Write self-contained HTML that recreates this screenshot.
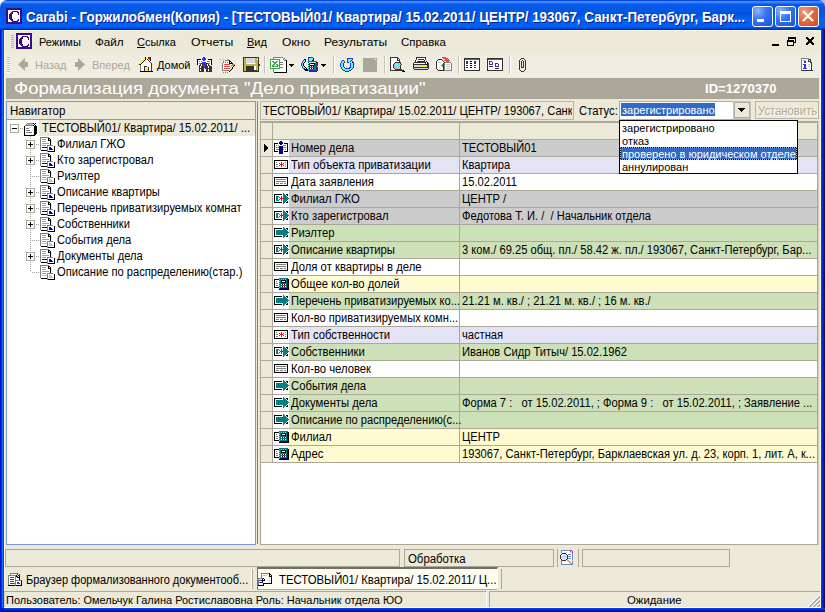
<!DOCTYPE html><html><head><meta charset="utf-8"><style>
*{margin:0;padding:0;box-sizing:border-box}
html,body{width:825px;height:612px;overflow:hidden;background:#ECE9D8}
body{position:relative;font-family:"Liberation Sans",sans-serif;font-size:11px;color:#000}
.ab{position:absolute}
.t{position:absolute;white-space:pre;line-height:13px;font-size:11px}
.m{position:absolute;white-space:pre;line-height:14px;font-size:12px;transform:scaleX(0.94);transform-origin:0 0}
svg{position:absolute;overflow:visible}
</style></head><body>
<div class="ab" style="left:0;top:0;width:8px;height:8px;background:#fff"></div>
<div class="ab" style="left:817px;top:0;width:8px;height:8px;background:#A8B8F0"></div>
<div class="ab" style="left:0;top:0;width:825px;height:30px;border-radius:7px 7px 0 0;background:linear-gradient(to bottom,#0A47DC 0px,#0A47DC 1px,#3C8DFF 1px,#3C8DFF 2px,#3483FC 2px,#3483FC 3px,#1B6CF2 3px,#1B6CF2 4px,#0658E6 4px,#0658E6 5px,#0458E6 9px,#0458E6 10px,#0054E0 13px,#0054E0 14px,#0060F6 18px,#0060F6 19px,#0060F6 26px,#0060F6 27px,#0054EA 27px,#0054EA 28px,#0044D4 28px,#0044D4 29px,#0030B0 29px,#0030B0 30px)"></div>
<div class="ab" style="left:0;top:30px;width:4px;height:582px;background:linear-gradient(to right,#0014D0 0,#0014D0 1px,#0A2EDB 1px,#0A2EDB 2px,#1670F0 2px,#1670F0 3px,#0048E0 3px)"></div>
<div class="ab" style="left:821px;top:30px;width:4px;height:582px;background:linear-gradient(to right,#0040F0 0,#0040F0 1px,#0030D0 1px,#0030D0 2px,#001CA0 2px,#001CA0 3px,#000E80 3px)"></div>
<div class="ab" style="left:0;top:608px;width:825px;height:4px;background:linear-gradient(to bottom,#0040F0 0,#0040F0 1px,#0030D0 1px,#0030D0 2px,#001CA0 2px,#001CA0 3px,#000E80 3px)"></div>
<div class="ab" style="left:0;top:608px;width:4px;height:4px;background:#0014D0"></div>
<div class="ab" style="left:4px;top:30px;width:1px;height:578px;background:#FFF6DA"></div>
<div class="ab" style="left:820px;top:30px;width:1px;height:578px;background:#FFF7DC"></div>
<div class="ab" style="left:4px;top:607px;width:817px;height:1px;background:#FFFFF5"></div>
<svg style="left:6px;top:8px" width="16" height="16" shape-rendering="crispEdges"><rect x="0" y="0" width="16" height="1" fill="#3A0A8C"/><rect x="0" y="1" width="16" height="1" fill="#3A0A8C"/><rect x="0" y="2" width="2" height="1" fill="#3A0A8C"/><rect x="2" y="2" width="12" height="1" fill="#FFFFFF"/><rect x="14" y="2" width="2" height="1" fill="#3A0A8C"/><rect x="0" y="3" width="2" height="1" fill="#3A0A8C"/><rect x="2" y="3" width="4" height="1" fill="#FFFFFF"/><rect x="6" y="3" width="6" height="1" fill="#3A0A8C"/><rect x="12" y="3" width="2" height="1" fill="#FFFFFF"/><rect x="14" y="3" width="2" height="1" fill="#3A0A8C"/><rect x="0" y="4" width="2" height="1" fill="#3A0A8C"/><rect x="2" y="4" width="3" height="1" fill="#FFFFFF"/><rect x="5" y="4" width="2" height="1" fill="#3A0A8C"/><rect x="7" y="4" width="4" height="1" fill="#FFFFFF"/><rect x="11" y="4" width="2" height="1" fill="#3A0A8C"/><rect x="13" y="4" width="1" height="1" fill="#FFFFFF"/><rect x="14" y="4" width="2" height="1" fill="#3A0A8C"/><rect x="0" y="5" width="2" height="1" fill="#3A0A8C"/><rect x="2" y="5" width="2" height="1" fill="#FFFFFF"/><rect x="4" y="5" width="3" height="1" fill="#3A0A8C"/><rect x="7" y="5" width="5" height="1" fill="#FFFFFF"/><rect x="12" y="5" width="1" height="1" fill="#3A0A8C"/><rect x="13" y="5" width="1" height="1" fill="#FFFFFF"/><rect x="14" y="5" width="2" height="1" fill="#3A0A8C"/><rect x="0" y="6" width="2" height="1" fill="#3A0A8C"/><rect x="2" y="6" width="1" height="1" fill="#FFFFFF"/><rect x="3" y="6" width="3" height="1" fill="#3A0A8C"/><rect x="6" y="6" width="6" height="1" fill="#FFFFFF"/><rect x="12" y="6" width="1" height="1" fill="#3A0A8C"/><rect x="13" y="6" width="1" height="1" fill="#FFFFFF"/><rect x="14" y="6" width="2" height="1" fill="#3A0A8C"/><rect x="0" y="7" width="2" height="1" fill="#3A0A8C"/><rect x="2" y="7" width="1" height="1" fill="#FFFFFF"/><rect x="3" y="7" width="3" height="1" fill="#3A0A8C"/><rect x="6" y="7" width="8" height="1" fill="#FFFFFF"/><rect x="14" y="7" width="2" height="1" fill="#3A0A8C"/><rect x="0" y="8" width="2" height="1" fill="#3A0A8C"/><rect x="2" y="8" width="1" height="1" fill="#FFFFFF"/><rect x="3" y="8" width="3" height="1" fill="#3A0A8C"/><rect x="6" y="8" width="8" height="1" fill="#FFFFFF"/><rect x="14" y="8" width="2" height="1" fill="#3A0A8C"/><rect x="0" y="9" width="2" height="1" fill="#3A0A8C"/><rect x="2" y="9" width="1" height="1" fill="#FFFFFF"/><rect x="3" y="9" width="3" height="1" fill="#3A0A8C"/><rect x="6" y="9" width="8" height="1" fill="#FFFFFF"/><rect x="14" y="9" width="2" height="1" fill="#3A0A8C"/><rect x="0" y="10" width="2" height="1" fill="#3A0A8C"/><rect x="2" y="10" width="1" height="1" fill="#FFFFFF"/><rect x="3" y="10" width="3" height="1" fill="#3A0A8C"/><rect x="6" y="10" width="8" height="1" fill="#FFFFFF"/><rect x="14" y="10" width="2" height="1" fill="#3A0A8C"/><rect x="0" y="11" width="2" height="1" fill="#3A0A8C"/><rect x="2" y="11" width="2" height="1" fill="#FFFFFF"/><rect x="4" y="11" width="3" height="1" fill="#3A0A8C"/><rect x="7" y="11" width="5" height="1" fill="#FFFFFF"/><rect x="12" y="11" width="1" height="1" fill="#3A0A8C"/><rect x="13" y="11" width="1" height="1" fill="#FFFFFF"/><rect x="14" y="11" width="2" height="1" fill="#3A0A8C"/><rect x="0" y="12" width="2" height="1" fill="#3A0A8C"/><rect x="2" y="12" width="3" height="1" fill="#FFFFFF"/><rect x="5" y="12" width="2" height="1" fill="#3A0A8C"/><rect x="7" y="12" width="4" height="1" fill="#FFFFFF"/><rect x="11" y="12" width="2" height="1" fill="#3A0A8C"/><rect x="13" y="12" width="1" height="1" fill="#FFFFFF"/><rect x="14" y="12" width="2" height="1" fill="#3A0A8C"/><rect x="0" y="13" width="2" height="1" fill="#3A0A8C"/><rect x="2" y="13" width="4" height="1" fill="#FFFFFF"/><rect x="6" y="13" width="6" height="1" fill="#3A0A8C"/><rect x="12" y="13" width="2" height="1" fill="#FFFFFF"/><rect x="14" y="13" width="2" height="1" fill="#3A0A8C"/><rect x="0" y="14" width="16" height="1" fill="#3A0A8C"/><rect x="0" y="15" width="16" height="1" fill="#3A0A8C"/></svg>
<div class="t" style="left:27px;top:10px;font:bold 14px/16px 'Liberation Sans';color:#0A1E8C;transform:scaleX(0.957);transform-origin:0 0">Carabi - Горжилобмен(Копия) - [ТЕСТОВЫЙ01/ Квартира/ 15.02.2011/ ЦЕНТР/ 193067, Санкт-Петербург, Барк...</div>
<div class="t" style="left:26px;top:9px;font:bold 14px/16px 'Liberation Sans';color:#fff;transform:scaleX(0.957);transform-origin:0 0">Carabi - Горжилобмен(Копия) - [ТЕСТОВЫЙ01/ Квартира/ 15.02.2011/ ЦЕНТР/ 193067, Санкт-Петербург, Барк...</div>
<div class="ab" style="left:752px;top:6px;width:21px;height:21px;border:1px solid #fff;border-radius:3px;background:radial-gradient(circle at 25% 20%,#8FB4FA 0,#3A78F2 40%,#2260E6 75%,#1A50D8 100%)"></div>
<div class="ab" style="left:775px;top:6px;width:21px;height:21px;border:1px solid #fff;border-radius:3px;background:radial-gradient(circle at 25% 20%,#8FB4FA 0,#3A78F2 40%,#2260E6 75%,#1A50D8 100%)"></div>
<div class="ab" style="left:798px;top:6px;width:21px;height:21px;border:1px solid #fff;border-radius:3px;background:radial-gradient(circle at 30% 25%,#F0A080 0,#E26A45 45%,#D04A20 100%)"></div>
<div class="ab" style="left:757px;top:19px;width:7px;height:3px;background:#fff"></div>
<div class="ab" style="left:780px;top:11px;width:11px;height:11px;border:1px solid #fff;border-top:3px solid #fff"></div>
<svg style="left:798px;top:6px" width="21" height="21"><path d="M5 5 L15 15 M15 5 L5 15" stroke="#fff" stroke-width="2.2"/></svg>
<div class="ab" style="left:11px;top:35px;width:3px;height:1px;background:#B8B5A4"></div>
<div class="ab" style="left:11px;top:37px;width:3px;height:1px;background:#B8B5A4"></div>
<div class="ab" style="left:11px;top:39px;width:3px;height:1px;background:#B8B5A4"></div>
<div class="ab" style="left:11px;top:41px;width:3px;height:1px;background:#B8B5A4"></div>
<div class="ab" style="left:11px;top:43px;width:3px;height:1px;background:#B8B5A4"></div>
<div class="ab" style="left:11px;top:45px;width:3px;height:1px;background:#B8B5A4"></div>
<div class="ab" style="left:11px;top:47px;width:3px;height:1px;background:#B8B5A4"></div>
<svg style="left:16px;top:33px" width="16" height="16" shape-rendering="crispEdges"><rect x="0" y="0" width="16" height="1" fill="#3A0A8C"/><rect x="0" y="1" width="16" height="1" fill="#3A0A8C"/><rect x="0" y="2" width="2" height="1" fill="#3A0A8C"/><rect x="2" y="2" width="12" height="1" fill="#FFFFFF"/><rect x="14" y="2" width="2" height="1" fill="#3A0A8C"/><rect x="0" y="3" width="2" height="1" fill="#3A0A8C"/><rect x="2" y="3" width="4" height="1" fill="#FFFFFF"/><rect x="6" y="3" width="6" height="1" fill="#3A0A8C"/><rect x="12" y="3" width="2" height="1" fill="#FFFFFF"/><rect x="14" y="3" width="2" height="1" fill="#3A0A8C"/><rect x="0" y="4" width="2" height="1" fill="#3A0A8C"/><rect x="2" y="4" width="3" height="1" fill="#FFFFFF"/><rect x="5" y="4" width="2" height="1" fill="#3A0A8C"/><rect x="7" y="4" width="4" height="1" fill="#FFFFFF"/><rect x="11" y="4" width="2" height="1" fill="#3A0A8C"/><rect x="13" y="4" width="1" height="1" fill="#FFFFFF"/><rect x="14" y="4" width="2" height="1" fill="#3A0A8C"/><rect x="0" y="5" width="2" height="1" fill="#3A0A8C"/><rect x="2" y="5" width="2" height="1" fill="#FFFFFF"/><rect x="4" y="5" width="3" height="1" fill="#3A0A8C"/><rect x="7" y="5" width="5" height="1" fill="#FFFFFF"/><rect x="12" y="5" width="1" height="1" fill="#3A0A8C"/><rect x="13" y="5" width="1" height="1" fill="#FFFFFF"/><rect x="14" y="5" width="2" height="1" fill="#3A0A8C"/><rect x="0" y="6" width="2" height="1" fill="#3A0A8C"/><rect x="2" y="6" width="1" height="1" fill="#FFFFFF"/><rect x="3" y="6" width="3" height="1" fill="#3A0A8C"/><rect x="6" y="6" width="6" height="1" fill="#FFFFFF"/><rect x="12" y="6" width="1" height="1" fill="#3A0A8C"/><rect x="13" y="6" width="1" height="1" fill="#FFFFFF"/><rect x="14" y="6" width="2" height="1" fill="#3A0A8C"/><rect x="0" y="7" width="2" height="1" fill="#3A0A8C"/><rect x="2" y="7" width="1" height="1" fill="#FFFFFF"/><rect x="3" y="7" width="3" height="1" fill="#3A0A8C"/><rect x="6" y="7" width="8" height="1" fill="#FFFFFF"/><rect x="14" y="7" width="2" height="1" fill="#3A0A8C"/><rect x="0" y="8" width="2" height="1" fill="#3A0A8C"/><rect x="2" y="8" width="1" height="1" fill="#FFFFFF"/><rect x="3" y="8" width="3" height="1" fill="#3A0A8C"/><rect x="6" y="8" width="8" height="1" fill="#FFFFFF"/><rect x="14" y="8" width="2" height="1" fill="#3A0A8C"/><rect x="0" y="9" width="2" height="1" fill="#3A0A8C"/><rect x="2" y="9" width="1" height="1" fill="#FFFFFF"/><rect x="3" y="9" width="3" height="1" fill="#3A0A8C"/><rect x="6" y="9" width="8" height="1" fill="#FFFFFF"/><rect x="14" y="9" width="2" height="1" fill="#3A0A8C"/><rect x="0" y="10" width="2" height="1" fill="#3A0A8C"/><rect x="2" y="10" width="1" height="1" fill="#FFFFFF"/><rect x="3" y="10" width="3" height="1" fill="#3A0A8C"/><rect x="6" y="10" width="8" height="1" fill="#FFFFFF"/><rect x="14" y="10" width="2" height="1" fill="#3A0A8C"/><rect x="0" y="11" width="2" height="1" fill="#3A0A8C"/><rect x="2" y="11" width="2" height="1" fill="#FFFFFF"/><rect x="4" y="11" width="3" height="1" fill="#3A0A8C"/><rect x="7" y="11" width="5" height="1" fill="#FFFFFF"/><rect x="12" y="11" width="1" height="1" fill="#3A0A8C"/><rect x="13" y="11" width="1" height="1" fill="#FFFFFF"/><rect x="14" y="11" width="2" height="1" fill="#3A0A8C"/><rect x="0" y="12" width="2" height="1" fill="#3A0A8C"/><rect x="2" y="12" width="3" height="1" fill="#FFFFFF"/><rect x="5" y="12" width="2" height="1" fill="#3A0A8C"/><rect x="7" y="12" width="4" height="1" fill="#FFFFFF"/><rect x="11" y="12" width="2" height="1" fill="#3A0A8C"/><rect x="13" y="12" width="1" height="1" fill="#FFFFFF"/><rect x="14" y="12" width="2" height="1" fill="#3A0A8C"/><rect x="0" y="13" width="2" height="1" fill="#3A0A8C"/><rect x="2" y="13" width="4" height="1" fill="#FFFFFF"/><rect x="6" y="13" width="6" height="1" fill="#3A0A8C"/><rect x="12" y="13" width="2" height="1" fill="#FFFFFF"/><rect x="14" y="13" width="2" height="1" fill="#3A0A8C"/><rect x="0" y="14" width="16" height="1" fill="#3A0A8C"/><rect x="0" y="15" width="16" height="1" fill="#3A0A8C"/></svg>
<div class="t" style="left:39px;top:36px">Режимы</div>
<div class="t" style="left:95px;top:36px;transform:scaleX(1.06);transform-origin:0 0">Файл</div>
<div class="t" style="left:137px;top:36px"><u>С</u>сылка</div>
<div class="t" style="left:191px;top:36px;transform:scaleX(1.11);transform-origin:0 0">Отчеты</div>
<div class="t" style="left:247px;top:36px"><u>В</u>ид</div>
<div class="t" style="left:282px;top:36px;transform:scaleX(1.1);transform-origin:0 0">Окно</div>
<div class="t" style="left:324px;top:36px;transform:scaleX(1.09);transform-origin:0 0">Результаты</div>
<div class="t" style="left:401px;top:36px;transform:scaleX(1.04);transform-origin:0 0">Справка</div>
<svg style="left:772px;top:44px" width="7" height="2" shape-rendering="crispEdges"><rect x="0" y="0" width="7" height="1" fill="#000000"/><rect x="0" y="1" width="7" height="1" fill="#000000"/></svg>
<svg style="left:787px;top:37px" width="9" height="9" shape-rendering="crispEdges"><rect x="1" y="0" width="8" height="1" fill="#000000"/><rect x="1" y="1" width="8" height="1" fill="#000000"/><rect x="1" y="2" width="1" height="1" fill="#000000"/><rect x="8" y="2" width="1" height="1" fill="#000000"/><rect x="0" y="3" width="7" height="1" fill="#000000"/><rect x="8" y="3" width="1" height="1" fill="#000000"/><rect x="0" y="4" width="7" height="1" fill="#000000"/><rect x="8" y="4" width="1" height="1" fill="#000000"/><rect x="0" y="5" width="1" height="1" fill="#000000"/><rect x="6" y="5" width="3" height="1" fill="#000000"/><rect x="0" y="6" width="1" height="1" fill="#000000"/><rect x="6" y="6" width="1" height="1" fill="#000000"/><rect x="0" y="7" width="1" height="1" fill="#000000"/><rect x="6" y="7" width="1" height="1" fill="#000000"/><rect x="0" y="8" width="7" height="1" fill="#000000"/></svg>
<svg style="left:806px;top:37px" width="8" height="8" shape-rendering="crispEdges"><rect x="0" y="0" width="2" height="1" fill="#000000"/><rect x="6" y="0" width="2" height="1" fill="#000000"/><rect x="0" y="1" width="3" height="1" fill="#000000"/><rect x="5" y="1" width="3" height="1" fill="#000000"/><rect x="1" y="2" width="6" height="1" fill="#000000"/><rect x="2" y="3" width="4" height="1" fill="#000000"/><rect x="2" y="4" width="4" height="1" fill="#000000"/><rect x="1" y="5" width="6" height="1" fill="#000000"/><rect x="0" y="6" width="3" height="1" fill="#000000"/><rect x="5" y="6" width="3" height="1" fill="#000000"/><rect x="0" y="7" width="2" height="1" fill="#000000"/><rect x="6" y="7" width="2" height="1" fill="#000000"/></svg>
<div class="ab" style="left:5px;top:53px;width:815px;height:25px;background:#EFEDE1"></div>
<div class="ab" style="left:5px;top:30px;width:815px;height:1px;background:#FAF6E6"></div>
<div class="ab" style="left:7px;top:57px;width:3px;height:1px;background:#C1BEAD"></div>
<div class="ab" style="left:7px;top:58px;width:3px;height:1px;background:#FFFFFF"></div>
<div class="ab" style="left:7px;top:59px;width:3px;height:1px;background:#C1BEAD"></div>
<div class="ab" style="left:7px;top:60px;width:3px;height:1px;background:#FFFFFF"></div>
<div class="ab" style="left:7px;top:61px;width:3px;height:1px;background:#C1BEAD"></div>
<div class="ab" style="left:7px;top:62px;width:3px;height:1px;background:#FFFFFF"></div>
<div class="ab" style="left:7px;top:63px;width:3px;height:1px;background:#C1BEAD"></div>
<div class="ab" style="left:7px;top:64px;width:3px;height:1px;background:#FFFFFF"></div>
<div class="ab" style="left:7px;top:65px;width:3px;height:1px;background:#C1BEAD"></div>
<div class="ab" style="left:7px;top:66px;width:3px;height:1px;background:#FFFFFF"></div>
<div class="ab" style="left:7px;top:67px;width:3px;height:1px;background:#C1BEAD"></div>
<div class="ab" style="left:7px;top:68px;width:3px;height:1px;background:#FFFFFF"></div>
<div class="ab" style="left:7px;top:69px;width:3px;height:1px;background:#C1BEAD"></div>
<div class="ab" style="left:7px;top:70px;width:3px;height:1px;background:#FFFFFF"></div>
<div class="ab" style="left:7px;top:71px;width:3px;height:1px;background:#C1BEAD"></div>
<div class="ab" style="left:7px;top:72px;width:3px;height:1px;background:#FFFFFF"></div>
<svg style="left:17px;top:57px" width="12" height="16" shape-rendering="crispEdges"><path d="M1 7.5 L8 1 L8 5 L11 5 L11 10 L8 10 L8 14 Z" fill="#ACA899" shape-rendering="auto"/></svg>
<div class="t" style="left:35px;top:59px;color:#ACA899;">Назад</div>
<svg style="left:75px;top:57px" width="12" height="16" shape-rendering="crispEdges"><path d="M10 7.5 L3 1 L3 5 L0 5 L0 10 L3 10 L3 14 Z" fill="#ACA899" shape-rendering="auto"/></svg>
<div class="t" style="left:92px;top:59px;color:#ACA899;">Вперед</div>
<svg style="left:137px;top:57px" width="16" height="15" shape-rendering="crispEdges"><rect x="8" y="0" width="1" height="1" fill="#000000"/><rect x="11" y="0" width="2" height="1" fill="#FF0000"/><rect x="13" y="0" width="1" height="1" fill="#3A3030"/><rect x="7" y="1" width="1" height="1" fill="#E8E850"/><rect x="8" y="1" width="1" height="1" fill="#000000"/><rect x="9" y="1" width="1" height="1" fill="#E8E850"/><rect x="11" y="1" width="2" height="1" fill="#FF0000"/><rect x="13" y="1" width="1" height="1" fill="#3A3030"/><rect x="6" y="2" width="1" height="1" fill="#E8E850"/><rect x="7" y="2" width="1" height="1" fill="#FFFFFF"/><rect x="8" y="2" width="1" height="1" fill="#000000"/><rect x="9" y="2" width="1" height="1" fill="#FFFFFF"/><rect x="10" y="2" width="1" height="1" fill="#3A3030"/><rect x="12" y="2" width="1" height="1" fill="#FF0000"/><rect x="13" y="2" width="1" height="1" fill="#3A3030"/><rect x="5" y="3" width="1" height="1" fill="#E8E850"/><rect x="6" y="3" width="1" height="1" fill="#FFFFFF"/><rect x="7" y="3" width="1" height="1" fill="#000000"/><rect x="8" y="3" width="3" height="1" fill="#FFFFFF"/><rect x="11" y="3" width="1" height="1" fill="#3A3030"/><rect x="13" y="3" width="1" height="1" fill="#3A3030"/><rect x="4" y="4" width="1" height="1" fill="#E8E850"/><rect x="5" y="4" width="1" height="1" fill="#FFFFFF"/><rect x="6" y="4" width="1" height="1" fill="#000000"/><rect x="7" y="4" width="5" height="1" fill="#FFFFFF"/><rect x="12" y="4" width="1" height="1" fill="#3A3030"/><rect x="3" y="5" width="1" height="1" fill="#E8E850"/><rect x="4" y="5" width="1" height="1" fill="#FFFFFF"/><rect x="5" y="5" width="1" height="1" fill="#000000"/><rect x="6" y="5" width="7" height="1" fill="#FFFFFF"/><rect x="13" y="5" width="1" height="1" fill="#3A3030"/><rect x="2" y="6" width="1" height="1" fill="#E8E850"/><rect x="3" y="6" width="1" height="1" fill="#FFFFFF"/><rect x="4" y="6" width="1" height="1" fill="#000000"/><rect x="5" y="6" width="9" height="1" fill="#FFFFFF"/><rect x="14" y="6" width="1" height="1" fill="#3A3030"/><rect x="1" y="7" width="1" height="1" fill="#E8E850"/><rect x="2" y="7" width="1" height="1" fill="#3A3030"/><rect x="3" y="7" width="1" height="1" fill="#000000"/><rect x="4" y="7" width="10" height="1" fill="#FFFFFF"/><rect x="14" y="7" width="1" height="1" fill="#3A3030"/><rect x="15" y="7" width="1" height="1" fill="#E8E850"/><rect x="3" y="8" width="1" height="1" fill="#808080"/><rect x="4" y="8" width="10" height="1" fill="#FFFFFF"/><rect x="14" y="8" width="1" height="1" fill="#3A3030"/><rect x="3" y="9" width="1" height="1" fill="#808080"/><rect x="4" y="9" width="3" height="1" fill="#FFFFFF"/><rect x="7" y="9" width="3" height="1" fill="#3A3030"/><rect x="10" y="9" width="4" height="1" fill="#FFFFFF"/><rect x="14" y="9" width="1" height="1" fill="#3A3030"/><rect x="3" y="10" width="1" height="1" fill="#808080"/><rect x="4" y="10" width="3" height="1" fill="#FFFFFF"/><rect x="7" y="10" width="1" height="1" fill="#3A3030"/><rect x="8" y="10" width="1" height="1" fill="#FFFF00"/><rect x="9" y="10" width="1" height="1" fill="#FFFFFF"/><rect x="10" y="10" width="1" height="1" fill="#E8E850"/><rect x="11" y="10" width="1" height="1" fill="#3A3030"/><rect x="12" y="10" width="2" height="1" fill="#FFFFFF"/><rect x="14" y="10" width="1" height="1" fill="#3A3030"/><rect x="3" y="11" width="1" height="1" fill="#808080"/><rect x="4" y="11" width="3" height="1" fill="#FFFFFF"/><rect x="7" y="11" width="1" height="1" fill="#3A3030"/><rect x="8" y="11" width="3" height="1" fill="#E8E850"/><rect x="11" y="11" width="1" height="1" fill="#3A3030"/><rect x="12" y="11" width="2" height="1" fill="#FFFFFF"/><rect x="14" y="11" width="1" height="1" fill="#3A3030"/><rect x="3" y="12" width="1" height="1" fill="#808080"/><rect x="4" y="12" width="3" height="1" fill="#FFFFFF"/><rect x="7" y="12" width="1" height="1" fill="#3A3030"/><rect x="8" y="12" width="1" height="1" fill="#E8E850"/><rect x="9" y="12" width="1" height="1" fill="#FFFF00"/><rect x="10" y="12" width="1" height="1" fill="#E8E850"/><rect x="11" y="12" width="1" height="1" fill="#3A3030"/><rect x="12" y="12" width="2" height="1" fill="#FFFFFF"/><rect x="14" y="12" width="1" height="1" fill="#3A3030"/><rect x="3" y="13" width="1" height="1" fill="#808080"/><rect x="4" y="13" width="3" height="1" fill="#FFFFFF"/><rect x="7" y="13" width="1" height="1" fill="#3A3030"/><rect x="8" y="13" width="3" height="1" fill="#E8E850"/><rect x="11" y="13" width="1" height="1" fill="#3A3030"/><rect x="12" y="13" width="2" height="1" fill="#FFFFFF"/><rect x="14" y="13" width="1" height="1" fill="#3A3030"/><rect x="3" y="14" width="13" height="1" fill="#000000"/></svg>
<div class="t" style="left:157px;top:59px;color:#000;">Домой</div>
<svg style="left:197px;top:57px" width="16" height="15" shape-rendering="crispEdges"><rect x="6" y="0" width="2" height="1" fill="#3030FF"/><rect x="5" y="1" width="4" height="1" fill="#3030FF"/><rect x="0" y="2" width="4" height="1" fill="#000000"/><rect x="5" y="2" width="4" height="1" fill="#3030FF"/><rect x="11" y="2" width="4" height="1" fill="#000000"/><rect x="0" y="3" width="1" height="1" fill="#000000"/><rect x="1" y="3" width="4" height="1" fill="#FFFFFF"/><rect x="6" y="3" width="2" height="1" fill="#3030FF"/><rect x="9" y="3" width="5" height="1" fill="#FFFFFF"/><rect x="14" y="3" width="1" height="1" fill="#000000"/><rect x="0" y="4" width="1" height="1" fill="#000000"/><rect x="1" y="4" width="1" height="1" fill="#FFFFFF"/><rect x="2" y="4" width="1" height="1" fill="#808080"/><rect x="3" y="4" width="1" height="1" fill="#FFFFFF"/><rect x="4" y="4" width="1" height="1" fill="#808080"/><rect x="5" y="4" width="5" height="1" fill="#FFFFFF"/><rect x="10" y="4" width="3" height="1" fill="#808080"/><rect x="13" y="4" width="1" height="1" fill="#FFFFFF"/><rect x="14" y="4" width="1" height="1" fill="#000000"/><rect x="0" y="5" width="1" height="1" fill="#000000"/><rect x="1" y="5" width="4" height="1" fill="#FFFFFF"/><rect x="5" y="5" width="4" height="1" fill="#3030FF"/><rect x="9" y="5" width="5" height="1" fill="#FFFFFF"/><rect x="14" y="5" width="1" height="1" fill="#000000"/><rect x="0" y="6" width="1" height="1" fill="#000000"/><rect x="1" y="6" width="1" height="1" fill="#FFFFFF"/><rect x="2" y="6" width="2" height="1" fill="#808080"/><rect x="4" y="6" width="1" height="1" fill="#3A3030"/><rect x="5" y="6" width="4" height="1" fill="#3030FF"/><rect x="9" y="6" width="2" height="1" fill="#3A3030"/><rect x="11" y="6" width="2" height="1" fill="#808080"/><rect x="13" y="6" width="1" height="1" fill="#FFFFFF"/><rect x="14" y="6" width="1" height="1" fill="#000000"/><rect x="0" y="7" width="1" height="1" fill="#000000"/><rect x="1" y="7" width="2" height="1" fill="#FFFFFF"/><rect x="3" y="7" width="1" height="1" fill="#3A3030"/><rect x="4" y="7" width="1" height="1" fill="#FFFFFF"/><rect x="5" y="7" width="1" height="1" fill="#3A3030"/><rect x="6" y="7" width="3" height="1" fill="#3030FF"/><rect x="9" y="7" width="1" height="1" fill="#3A3030"/><rect x="10" y="7" width="1" height="1" fill="#FFFFFF"/><rect x="11" y="7" width="1" height="1" fill="#3A3030"/><rect x="12" y="7" width="2" height="1" fill="#FFFFFF"/><rect x="14" y="7" width="1" height="1" fill="#000000"/><rect x="2" y="8" width="2" height="1" fill="#3A3030"/><rect x="4" y="8" width="1" height="1" fill="#FFFFFF"/><rect x="5" y="8" width="1" height="1" fill="#3A3030"/><rect x="6" y="8" width="3" height="1" fill="#3030FF"/><rect x="9" y="8" width="1" height="1" fill="#3A3030"/><rect x="10" y="8" width="1" height="1" fill="#FFFFFF"/><rect x="11" y="8" width="2" height="1" fill="#3A3030"/><rect x="2" y="9" width="1" height="1" fill="#3A3030"/><rect x="3" y="9" width="1" height="1" fill="#FFFFFF"/><rect x="4" y="9" width="2" height="1" fill="#3A3030"/><rect x="6" y="9" width="2" height="1" fill="#3030FF"/><rect x="8" y="9" width="3" height="1" fill="#3A3030"/><rect x="11" y="9" width="1" height="1" fill="#FFFFFF"/><rect x="12" y="9" width="3" height="1" fill="#3A3030"/><rect x="2" y="10" width="1" height="1" fill="#3A3030"/><rect x="3" y="10" width="1" height="1" fill="#FFFFFF"/><rect x="4" y="10" width="7" height="1" fill="#3A3030"/><rect x="11" y="10" width="1" height="1" fill="#FFFFFF"/><rect x="12" y="10" width="3" height="1" fill="#3A3030"/><rect x="2" y="11" width="5" height="1" fill="#3A3030"/><rect x="8" y="11" width="7" height="1" fill="#3A3030"/><rect x="2" y="12" width="1" height="1" fill="#3A3030"/><rect x="3" y="12" width="1" height="1" fill="#FFFFFF"/><rect x="4" y="12" width="3" height="1" fill="#3A3030"/><rect x="9" y="12" width="2" height="1" fill="#3A3030"/><rect x="11" y="12" width="1" height="1" fill="#FFFFFF"/><rect x="12" y="12" width="3" height="1" fill="#3A3030"/><rect x="2" y="13" width="1" height="1" fill="#3A3030"/><rect x="3" y="13" width="1" height="1" fill="#FFFFFF"/><rect x="4" y="13" width="3" height="1" fill="#3A3030"/><rect x="9" y="13" width="2" height="1" fill="#3A3030"/><rect x="11" y="13" width="1" height="1" fill="#FFFFFF"/><rect x="12" y="13" width="3" height="1" fill="#3A3030"/><rect x="2" y="14" width="5" height="1" fill="#3A3030"/><rect x="9" y="14" width="6" height="1" fill="#3A3030"/></svg>
<svg style="left:218px;top:57px" width="18" height="16" shape-rendering="crispEdges"><rect x="2" y="0" width="1" height="1" fill="#FFFF00"/><rect x="8" y="0" width="1" height="1" fill="#FFFF00"/><rect x="3" y="1" width="1" height="1" fill="#FFFF00"/><rect x="5" y="1" width="1" height="1" fill="#C0C0C0"/><rect x="7" y="1" width="1" height="1" fill="#FFFF00"/><rect x="1" y="2" width="2" height="1" fill="#C0C0C0"/><rect x="4" y="2" width="3" height="1" fill="#FFFF00"/><rect x="9" y="2" width="2" height="1" fill="#C0C0C0"/><rect x="3" y="3" width="1" height="1" fill="#FFFF00"/><rect x="5" y="3" width="1" height="1" fill="#C0C0C0"/><rect x="7" y="3" width="4" height="1" fill="#808080"/><rect x="11" y="3" width="1" height="1" fill="#000000"/><rect x="2" y="4" width="1" height="1" fill="#FFFF00"/><rect x="5" y="4" width="1" height="1" fill="#808080"/><rect x="6" y="4" width="1" height="1" fill="#FFFF00"/><rect x="8" y="4" width="3" height="1" fill="#FFFFFF"/><rect x="11" y="4" width="2" height="1" fill="#000000"/><rect x="1" y="5" width="1" height="1" fill="#FFFF00"/><rect x="5" y="5" width="1" height="1" fill="#808080"/><rect x="6" y="5" width="1" height="1" fill="#FFFFFF"/><rect x="7" y="5" width="1" height="1" fill="#F04848"/><rect x="8" y="5" width="1" height="1" fill="#FFFFFF"/><rect x="9" y="5" width="1" height="1" fill="#F04848"/><rect x="10" y="5" width="1" height="1" fill="#FFFFFF"/><rect x="11" y="5" width="1" height="1" fill="#000000"/><rect x="12" y="5" width="1" height="1" fill="#FFFFFF"/><rect x="13" y="5" width="1" height="1" fill="#000000"/><rect x="4" y="6" width="1" height="1" fill="#808080"/><rect x="5" y="6" width="6" height="1" fill="#FFFFFF"/><rect x="11" y="6" width="4" height="1" fill="#000000"/><rect x="4" y="7" width="1" height="1" fill="#808080"/><rect x="5" y="7" width="1" height="1" fill="#FFFFFF"/><rect x="6" y="7" width="6" height="1" fill="#F04848"/><rect x="12" y="7" width="2" height="1" fill="#FFFFFF"/><rect x="14" y="7" width="1" height="1" fill="#808080"/><rect x="15" y="7" width="2" height="1" fill="#F07070"/><rect x="4" y="8" width="1" height="1" fill="#808080"/><rect x="5" y="8" width="8" height="1" fill="#FFFFFF"/><rect x="13" y="8" width="1" height="1" fill="#808080"/><rect x="14" y="8" width="2" height="1" fill="#F07070"/><rect x="16" y="8" width="1" height="1" fill="#000000"/><rect x="4" y="9" width="1" height="1" fill="#808080"/><rect x="5" y="9" width="1" height="1" fill="#FFFFFF"/><rect x="6" y="9" width="6" height="1" fill="#F04848"/><rect x="12" y="9" width="1" height="1" fill="#FFFFFF"/><rect x="13" y="9" width="2" height="1" fill="#E8E850"/><rect x="15" y="9" width="1" height="1" fill="#000000"/><rect x="4" y="10" width="1" height="1" fill="#808080"/><rect x="5" y="10" width="7" height="1" fill="#FFFFFF"/><rect x="12" y="10" width="2" height="1" fill="#E8E850"/><rect x="14" y="10" width="1" height="1" fill="#000000"/><rect x="4" y="11" width="1" height="1" fill="#808080"/><rect x="5" y="11" width="1" height="1" fill="#FFFFFF"/><rect x="6" y="11" width="6" height="1" fill="#F04848"/><rect x="12" y="11" width="2" height="1" fill="#E8E850"/><rect x="14" y="11" width="1" height="1" fill="#000000"/><rect x="4" y="12" width="1" height="1" fill="#808080"/><rect x="5" y="12" width="6" height="1" fill="#FFFFFF"/><rect x="11" y="12" width="2" height="1" fill="#E8E850"/><rect x="13" y="12" width="1" height="1" fill="#000000"/><rect x="4" y="13" width="7" height="1" fill="#808080"/><rect x="11" y="13" width="1" height="1" fill="#E8E850"/><rect x="12" y="13" width="1" height="1" fill="#000000"/><rect x="11" y="14" width="1" height="1" fill="#000000"/><rect x="5" y="15" width="1" height="1" fill="#808080"/><rect x="7" y="15" width="1" height="1" fill="#808080"/><rect x="9" y="15" width="1" height="1" fill="#808080"/></svg>
<svg style="left:243px;top:57px" width="17" height="15" shape-rendering="crispEdges"><rect x="0" y="0" width="16" height="1" fill="#3A3030"/><rect x="0" y="1" width="1" height="1" fill="#3A3030"/><rect x="1" y="1" width="2" height="1" fill="#B8B848"/><rect x="3" y="1" width="9" height="1" fill="#D8D8D8"/><rect x="12" y="1" width="2" height="1" fill="#B8B848"/><rect x="14" y="1" width="1" height="1" fill="#D8D8D8"/><rect x="15" y="1" width="1" height="1" fill="#3A3030"/><rect x="0" y="2" width="1" height="1" fill="#3A3030"/><rect x="1" y="2" width="2" height="1" fill="#B8B848"/><rect x="3" y="2" width="9" height="1" fill="#D8D8D8"/><rect x="12" y="2" width="2" height="1" fill="#B8B848"/><rect x="14" y="2" width="1" height="1" fill="#FFFFFF"/><rect x="15" y="2" width="1" height="1" fill="#3A3030"/><rect x="0" y="3" width="1" height="1" fill="#3A3030"/><rect x="1" y="3" width="2" height="1" fill="#B8B848"/><rect x="3" y="3" width="9" height="1" fill="#D8D8D8"/><rect x="12" y="3" width="3" height="1" fill="#B8B848"/><rect x="15" y="3" width="1" height="1" fill="#3A3030"/><rect x="0" y="4" width="1" height="1" fill="#3A3030"/><rect x="1" y="4" width="2" height="1" fill="#B8B848"/><rect x="3" y="4" width="9" height="1" fill="#D8D8D8"/><rect x="12" y="4" width="3" height="1" fill="#B8B848"/><rect x="15" y="4" width="1" height="1" fill="#3A3030"/><rect x="0" y="5" width="1" height="1" fill="#3A3030"/><rect x="1" y="5" width="2" height="1" fill="#B8B848"/><rect x="3" y="5" width="9" height="1" fill="#D8D8D8"/><rect x="12" y="5" width="3" height="1" fill="#B8B848"/><rect x="15" y="5" width="1" height="1" fill="#3A3030"/><rect x="0" y="6" width="1" height="1" fill="#3A3030"/><rect x="1" y="6" width="2" height="1" fill="#B8B848"/><rect x="3" y="6" width="1" height="1" fill="#D8D8D8"/><rect x="4" y="6" width="8" height="1" fill="#FFFFFF"/><rect x="12" y="6" width="1" height="1" fill="#D8D8D8"/><rect x="13" y="6" width="2" height="1" fill="#B8B848"/><rect x="15" y="6" width="1" height="1" fill="#3A3030"/><rect x="0" y="7" width="1" height="1" fill="#3A3030"/><rect x="1" y="7" width="14" height="1" fill="#B8B848"/><rect x="15" y="7" width="2" height="1" fill="#3A3030"/><rect x="0" y="8" width="1" height="1" fill="#3A3030"/><rect x="1" y="8" width="14" height="1" fill="#B8B848"/><rect x="15" y="8" width="2" height="1" fill="#3A3030"/><rect x="0" y="9" width="1" height="1" fill="#3A3030"/><rect x="1" y="9" width="2" height="1" fill="#B8B848"/><rect x="3" y="9" width="8" height="1" fill="#3A3030"/><rect x="11" y="9" width="2" height="1" fill="#FFFFFF"/><rect x="13" y="9" width="2" height="1" fill="#B8B848"/><rect x="15" y="9" width="1" height="1" fill="#3A3030"/><rect x="0" y="10" width="1" height="1" fill="#3A3030"/><rect x="1" y="10" width="2" height="1" fill="#B8B848"/><rect x="3" y="10" width="8" height="1" fill="#3A3030"/><rect x="11" y="10" width="2" height="1" fill="#FFFFFF"/><rect x="13" y="10" width="2" height="1" fill="#B8B848"/><rect x="15" y="10" width="1" height="1" fill="#3A3030"/><rect x="0" y="11" width="1" height="1" fill="#3A3030"/><rect x="1" y="11" width="2" height="1" fill="#B8B848"/><rect x="3" y="11" width="8" height="1" fill="#3A3030"/><rect x="11" y="11" width="2" height="1" fill="#FFFFFF"/><rect x="13" y="11" width="2" height="1" fill="#B8B848"/><rect x="15" y="11" width="1" height="1" fill="#3A3030"/><rect x="0" y="12" width="1" height="1" fill="#3A3030"/><rect x="1" y="12" width="2" height="1" fill="#B8B848"/><rect x="3" y="12" width="8" height="1" fill="#3A3030"/><rect x="11" y="12" width="2" height="1" fill="#FFFFFF"/><rect x="13" y="12" width="2" height="1" fill="#B8B848"/><rect x="15" y="12" width="1" height="1" fill="#3A3030"/><rect x="0" y="13" width="1" height="1" fill="#3A3030"/><rect x="1" y="13" width="2" height="1" fill="#B8B848"/><rect x="3" y="13" width="11" height="1" fill="#3A3030"/><rect x="14" y="13" width="1" height="1" fill="#B8B848"/><rect x="15" y="13" width="1" height="1" fill="#3A3030"/><rect x="0" y="14" width="16" height="1" fill="#3A3030"/></svg>
<div class="ab" style="left:264px;top:56px;width:1px;height:18px;background:#C5C2B2"></div>
<div class="ab" style="left:265px;top:56px;width:1px;height:18px;background:#fff"></div>
<svg style="left:270px;top:57px" width="17" height="16" shape-rendering="crispEdges"><rect x="3" y="0" width="10" height="1" fill="#808080"/><rect x="3" y="1" width="1" height="1" fill="#808080"/><rect x="4" y="1" width="9" height="1" fill="#FFFFFF"/><rect x="13" y="1" width="2" height="1" fill="#808080"/><rect x="0" y="2" width="10" height="1" fill="#38A848"/><rect x="10" y="2" width="3" height="1" fill="#FFFFFF"/><rect x="13" y="2" width="1" height="1" fill="#808080"/><rect x="14" y="2" width="1" height="1" fill="#FFFFFF"/><rect x="15" y="2" width="1" height="1" fill="#808080"/><rect x="0" y="3" width="1" height="1" fill="#38A848"/><rect x="1" y="3" width="8" height="1" fill="#FFFFFF"/><rect x="9" y="3" width="1" height="1" fill="#38A848"/><rect x="10" y="3" width="4" height="1" fill="#FFFFFF"/><rect x="14" y="3" width="2" height="1" fill="#808080"/><rect x="16" y="3" width="1" height="1" fill="#000000"/><rect x="0" y="4" width="1" height="1" fill="#38A848"/><rect x="1" y="4" width="1" height="1" fill="#FFFFFF"/><rect x="2" y="4" width="2" height="1" fill="#38A848"/><rect x="4" y="4" width="2" height="1" fill="#FFFFFF"/><rect x="6" y="4" width="2" height="1" fill="#38A848"/><rect x="8" y="4" width="1" height="1" fill="#FFFFFF"/><rect x="9" y="4" width="1" height="1" fill="#38A848"/><rect x="10" y="4" width="6" height="1" fill="#FFFFFF"/><rect x="16" y="4" width="1" height="1" fill="#000000"/><rect x="0" y="5" width="1" height="1" fill="#38A848"/><rect x="1" y="5" width="2" height="1" fill="#FFFFFF"/><rect x="3" y="5" width="4" height="1" fill="#38A848"/><rect x="7" y="5" width="2" height="1" fill="#FFFFFF"/><rect x="9" y="5" width="1" height="1" fill="#38A848"/><rect x="10" y="5" width="3" height="1" fill="#808080"/><rect x="13" y="5" width="3" height="1" fill="#FFFFFF"/><rect x="16" y="5" width="1" height="1" fill="#000000"/><rect x="0" y="6" width="1" height="1" fill="#38A848"/><rect x="1" y="6" width="3" height="1" fill="#FFFFFF"/><rect x="4" y="6" width="2" height="1" fill="#38A848"/><rect x="6" y="6" width="3" height="1" fill="#FFFFFF"/><rect x="9" y="6" width="1" height="1" fill="#38A848"/><rect x="10" y="6" width="6" height="1" fill="#FFFFFF"/><rect x="16" y="6" width="1" height="1" fill="#000000"/><rect x="0" y="7" width="1" height="1" fill="#38A848"/><rect x="1" y="7" width="2" height="1" fill="#FFFFFF"/><rect x="3" y="7" width="2" height="1" fill="#38A848"/><rect x="5" y="7" width="1" height="1" fill="#FFFFFF"/><rect x="6" y="7" width="2" height="1" fill="#38A848"/><rect x="8" y="7" width="1" height="1" fill="#FFFFFF"/><rect x="9" y="7" width="1" height="1" fill="#38A848"/><rect x="10" y="7" width="3" height="1" fill="#808080"/><rect x="13" y="7" width="3" height="1" fill="#FFFFFF"/><rect x="16" y="7" width="1" height="1" fill="#000000"/><rect x="0" y="8" width="1" height="1" fill="#38A848"/><rect x="1" y="8" width="1" height="1" fill="#FFFFFF"/><rect x="2" y="8" width="2" height="1" fill="#38A848"/><rect x="4" y="8" width="3" height="1" fill="#FFFFFF"/><rect x="7" y="8" width="3" height="1" fill="#38A848"/><rect x="10" y="8" width="6" height="1" fill="#FFFFFF"/><rect x="16" y="8" width="1" height="1" fill="#000000"/><rect x="0" y="9" width="1" height="1" fill="#38A848"/><rect x="1" y="9" width="1" height="1" fill="#FFFFFF"/><rect x="2" y="9" width="6" height="1" fill="#38A848"/><rect x="8" y="9" width="1" height="1" fill="#FFFFFF"/><rect x="9" y="9" width="1" height="1" fill="#38A848"/><rect x="10" y="9" width="6" height="1" fill="#FFFFFF"/><rect x="16" y="9" width="1" height="1" fill="#000000"/><rect x="0" y="10" width="1" height="1" fill="#38A848"/><rect x="1" y="10" width="8" height="1" fill="#FFFFFF"/><rect x="9" y="10" width="1" height="1" fill="#38A848"/><rect x="10" y="10" width="3" height="1" fill="#808080"/><rect x="13" y="10" width="3" height="1" fill="#FFFFFF"/><rect x="16" y="10" width="1" height="1" fill="#000000"/><rect x="0" y="11" width="10" height="1" fill="#38A848"/><rect x="10" y="11" width="6" height="1" fill="#FFFFFF"/><rect x="16" y="11" width="1" height="1" fill="#000000"/><rect x="3" y="12" width="1" height="1" fill="#808080"/><rect x="4" y="12" width="12" height="1" fill="#FFFFFF"/><rect x="16" y="12" width="1" height="1" fill="#000000"/><rect x="3" y="13" width="1" height="1" fill="#808080"/><rect x="4" y="13" width="12" height="1" fill="#FFFFFF"/><rect x="16" y="13" width="1" height="1" fill="#000000"/><rect x="3" y="14" width="1" height="1" fill="#808080"/><rect x="4" y="14" width="12" height="1" fill="#FFFFFF"/><rect x="16" y="14" width="1" height="1" fill="#000000"/><rect x="4" y="15" width="13" height="1" fill="#000000"/></svg>
<svg style="left:289px;top:64px" width="5" height="3" shape-rendering="crispEdges"><rect x="0" y="0" width="5" height="1" fill="#000"/><rect x="1" y="1" width="3" height="1" fill="#000"/><rect x="2" y="2" width="1" height="1" fill="#000"/></svg>
<svg style="left:301px;top:57px" width="18" height="15" shape-rendering="crispEdges"><rect x="7" y="0" width="5" height="1" fill="#3030B0"/><rect x="7" y="1" width="1" height="1" fill="#3030B0"/><rect x="8" y="1" width="4" height="1" fill="#50FFFF"/><rect x="12" y="1" width="1" height="1" fill="#000000"/><rect x="3" y="2" width="2" height="1" fill="#000000"/><rect x="7" y="2" width="1" height="1" fill="#3030B0"/><rect x="8" y="2" width="4" height="1" fill="#50FFFF"/><rect x="12" y="2" width="1" height="1" fill="#000000"/><rect x="2" y="3" width="1" height="1" fill="#3030B0"/><rect x="3" y="3" width="1" height="1" fill="#50FFFF"/><rect x="4" y="3" width="1" height="1" fill="#000000"/><rect x="7" y="3" width="1" height="1" fill="#3030B0"/><rect x="8" y="3" width="3" height="1" fill="#50FFFF"/><rect x="11" y="3" width="2" height="1" fill="#000000"/><rect x="1" y="4" width="1" height="1" fill="#3030B0"/><rect x="2" y="4" width="2" height="1" fill="#50FFFF"/><rect x="4" y="4" width="1" height="1" fill="#000000"/><rect x="7" y="4" width="9" height="1" fill="#008080"/><rect x="1" y="5" width="1" height="1" fill="#3030B0"/><rect x="2" y="5" width="1" height="1" fill="#50FFFF"/><rect x="3" y="5" width="1" height="1" fill="#000000"/><rect x="7" y="5" width="1" height="1" fill="#008080"/><rect x="8" y="5" width="1" height="1" fill="#50FFFF"/><rect x="9" y="5" width="1" height="1" fill="#FFFFFF"/><rect x="10" y="5" width="1" height="1" fill="#50FFFF"/><rect x="11" y="5" width="1" height="1" fill="#FFFFFF"/><rect x="12" y="5" width="1" height="1" fill="#50FFFF"/><rect x="13" y="5" width="1" height="1" fill="#FFFFFF"/><rect x="14" y="5" width="1" height="1" fill="#50FFFF"/><rect x="15" y="5" width="1" height="1" fill="#000000"/><rect x="16" y="5" width="1" height="1" fill="#3A3030"/><rect x="0" y="6" width="1" height="1" fill="#3030B0"/><rect x="1" y="6" width="1" height="1" fill="#50FFFF"/><rect x="2" y="6" width="1" height="1" fill="#000000"/><rect x="7" y="6" width="1" height="1" fill="#50FFFF"/><rect x="8" y="6" width="2" height="1" fill="#008080"/><rect x="10" y="6" width="4" height="1" fill="#000000"/><rect x="14" y="6" width="1" height="1" fill="#008080"/><rect x="15" y="6" width="1" height="1" fill="#3030B0"/><rect x="16" y="6" width="1" height="1" fill="#3A3030"/><rect x="0" y="7" width="1" height="1" fill="#3030B0"/><rect x="1" y="7" width="1" height="1" fill="#50FFFF"/><rect x="2" y="7" width="1" height="1" fill="#000000"/><rect x="7" y="7" width="1" height="1" fill="#008080"/><rect x="8" y="7" width="1" height="1" fill="#000000"/><rect x="9" y="7" width="4" height="1" fill="#FFFFFF"/><rect x="13" y="7" width="1" height="1" fill="#000000"/><rect x="14" y="7" width="1" height="1" fill="#008080"/><rect x="15" y="7" width="1" height="1" fill="#3030B0"/><rect x="16" y="7" width="1" height="1" fill="#3A3030"/><rect x="0" y="8" width="1" height="1" fill="#3030B0"/><rect x="1" y="8" width="1" height="1" fill="#50FFFF"/><rect x="2" y="8" width="1" height="1" fill="#000000"/><rect x="7" y="8" width="1" height="1" fill="#50FFFF"/><rect x="8" y="8" width="1" height="1" fill="#008080"/><rect x="9" y="8" width="4" height="1" fill="#000000"/><rect x="13" y="8" width="2" height="1" fill="#008080"/><rect x="15" y="8" width="1" height="1" fill="#3030B0"/><rect x="16" y="8" width="1" height="1" fill="#3A3030"/><rect x="1" y="9" width="1" height="1" fill="#3030B0"/><rect x="2" y="9" width="1" height="1" fill="#50FFFF"/><rect x="3" y="9" width="1" height="1" fill="#000000"/><rect x="7" y="9" width="1" height="1" fill="#008080"/><rect x="8" y="9" width="1" height="1" fill="#000000"/><rect x="9" y="9" width="1" height="1" fill="#FFFFFF"/><rect x="10" y="9" width="1" height="1" fill="#000000"/><rect x="11" y="9" width="1" height="1" fill="#FFFFFF"/><rect x="12" y="9" width="1" height="1" fill="#000000"/><rect x="13" y="9" width="1" height="1" fill="#008080"/><rect x="14" y="9" width="1" height="1" fill="#3030B0"/><rect x="15" y="9" width="1" height="1" fill="#3A3030"/><rect x="1" y="10" width="1" height="1" fill="#3030B0"/><rect x="2" y="10" width="2" height="1" fill="#50FFFF"/><rect x="4" y="10" width="1" height="1" fill="#000000"/><rect x="7" y="10" width="1" height="1" fill="#50FFFF"/><rect x="8" y="10" width="7" height="1" fill="#008080"/><rect x="15" y="10" width="1" height="1" fill="#3030B0"/><rect x="16" y="10" width="1" height="1" fill="#3A3030"/><rect x="2" y="11" width="2" height="1" fill="#3030B0"/><rect x="4" y="11" width="1" height="1" fill="#50FFFF"/><rect x="5" y="11" width="1" height="1" fill="#000000"/><rect x="7" y="11" width="1" height="1" fill="#008080"/><rect x="8" y="11" width="1" height="1" fill="#000000"/><rect x="9" y="11" width="1" height="1" fill="#FFFFFF"/><rect x="10" y="11" width="1" height="1" fill="#000000"/><rect x="11" y="11" width="1" height="1" fill="#FFFFFF"/><rect x="12" y="11" width="1" height="1" fill="#000000"/><rect x="13" y="11" width="2" height="1" fill="#008080"/><rect x="15" y="11" width="1" height="1" fill="#3030B0"/><rect x="16" y="11" width="1" height="1" fill="#3A3030"/><rect x="3" y="12" width="4" height="1" fill="#000000"/><rect x="7" y="12" width="1" height="1" fill="#50FFFF"/><rect x="8" y="12" width="7" height="1" fill="#008080"/><rect x="15" y="12" width="1" height="1" fill="#3030B0"/><rect x="16" y="12" width="1" height="1" fill="#3A3030"/><rect x="4" y="13" width="3" height="1" fill="#000000"/><rect x="7" y="13" width="1" height="1" fill="#008080"/><rect x="8" y="13" width="8" height="1" fill="#3030B0"/><rect x="16" y="13" width="1" height="1" fill="#3A3030"/><rect x="8" y="14" width="8" height="1" fill="#3A3030"/></svg>
<svg style="left:321px;top:64px" width="5" height="3" shape-rendering="crispEdges"><rect x="0" y="0" width="5" height="1" fill="#000"/><rect x="1" y="1" width="3" height="1" fill="#000"/><rect x="2" y="2" width="1" height="1" fill="#000"/></svg>
<div class="ab" style="left:333px;top:56px;width:1px;height:18px;background:#C5C2B2"></div>
<div class="ab" style="left:334px;top:56px;width:1px;height:18px;background:#fff"></div>
<svg style="left:340px;top:58px" width="16" height="14" shape-rendering="crispEdges"><rect x="7" y="0" width="6" height="1" fill="#3030FF"/><rect x="7" y="1" width="1" height="1" fill="#3030FF"/><rect x="8" y="1" width="4" height="1" fill="#50FFFF"/><rect x="12" y="1" width="1" height="1" fill="#3A3030"/><rect x="2" y="2" width="2" height="1" fill="#3030FF"/><rect x="7" y="2" width="1" height="1" fill="#3030FF"/><rect x="8" y="2" width="3" height="1" fill="#50FFFF"/><rect x="11" y="2" width="1" height="1" fill="#3A3030"/><rect x="1" y="3" width="1" height="1" fill="#3030FF"/><rect x="2" y="3" width="2" height="1" fill="#50FFFF"/><rect x="4" y="3" width="1" height="1" fill="#3A3030"/><rect x="7" y="3" width="1" height="1" fill="#3030FF"/><rect x="8" y="3" width="2" height="1" fill="#50FFFF"/><rect x="10" y="3" width="1" height="1" fill="#3030FF"/><rect x="11" y="3" width="1" height="1" fill="#50FFFF"/><rect x="12" y="3" width="1" height="1" fill="#3A3030"/><rect x="1" y="4" width="1" height="1" fill="#3030FF"/><rect x="2" y="4" width="2" height="1" fill="#50FFFF"/><rect x="4" y="4" width="1" height="1" fill="#3A3030"/><rect x="7" y="4" width="2" height="1" fill="#3030FF"/><rect x="10" y="4" width="2" height="1" fill="#50FFFF"/><rect x="12" y="4" width="2" height="1" fill="#3A3030"/><rect x="0" y="5" width="1" height="1" fill="#3030FF"/><rect x="1" y="5" width="2" height="1" fill="#50FFFF"/><rect x="3" y="5" width="1" height="1" fill="#3A3030"/><rect x="10" y="5" width="1" height="1" fill="#3030FF"/><rect x="11" y="5" width="2" height="1" fill="#50FFFF"/><rect x="13" y="5" width="1" height="1" fill="#3A3030"/><rect x="0" y="6" width="1" height="1" fill="#3030FF"/><rect x="1" y="6" width="2" height="1" fill="#50FFFF"/><rect x="3" y="6" width="1" height="1" fill="#3A3030"/><rect x="10" y="6" width="1" height="1" fill="#3030FF"/><rect x="11" y="6" width="2" height="1" fill="#50FFFF"/><rect x="13" y="6" width="1" height="1" fill="#3A3030"/><rect x="0" y="7" width="1" height="1" fill="#3030FF"/><rect x="1" y="7" width="2" height="1" fill="#50FFFF"/><rect x="3" y="7" width="1" height="1" fill="#3A3030"/><rect x="10" y="7" width="1" height="1" fill="#3030FF"/><rect x="11" y="7" width="2" height="1" fill="#50FFFF"/><rect x="13" y="7" width="1" height="1" fill="#3A3030"/><rect x="0" y="8" width="1" height="1" fill="#3030FF"/><rect x="1" y="8" width="2" height="1" fill="#50FFFF"/><rect x="3" y="8" width="1" height="1" fill="#3A3030"/><rect x="10" y="8" width="1" height="1" fill="#3030FF"/><rect x="11" y="8" width="2" height="1" fill="#50FFFF"/><rect x="13" y="8" width="1" height="1" fill="#3A3030"/><rect x="1" y="9" width="1" height="1" fill="#3030FF"/><rect x="2" y="9" width="2" height="1" fill="#50FFFF"/><rect x="4" y="9" width="1" height="1" fill="#3A3030"/><rect x="9" y="9" width="2" height="1" fill="#3030FF"/><rect x="11" y="9" width="2" height="1" fill="#50FFFF"/><rect x="13" y="9" width="1" height="1" fill="#3A3030"/><rect x="1" y="10" width="1" height="1" fill="#3030FF"/><rect x="2" y="10" width="3" height="1" fill="#50FFFF"/><rect x="5" y="10" width="5" height="1" fill="#3030FF"/><rect x="10" y="10" width="2" height="1" fill="#50FFFF"/><rect x="12" y="10" width="1" height="1" fill="#3A3030"/><rect x="2" y="11" width="1" height="1" fill="#3A3030"/><rect x="3" y="11" width="8" height="1" fill="#50FFFF"/><rect x="11" y="11" width="1" height="1" fill="#3A3030"/><rect x="3" y="12" width="2" height="1" fill="#3A3030"/><rect x="5" y="12" width="4" height="1" fill="#50FFFF"/><rect x="9" y="12" width="2" height="1" fill="#3A3030"/><rect x="5" y="13" width="4" height="1" fill="#3A3030"/></svg>
<div class="ab" style="left:363px;top:58px;width:14px;height:14px;background:#ACA899"></div>
<div class="ab" style="left:375px;top:59px;width:1px;height:1px;background:#fff"></div>
<div class="ab" style="left:384px;top:56px;width:1px;height:18px;background:#C5C2B2"></div>
<div class="ab" style="left:385px;top:56px;width:1px;height:18px;background:#fff"></div>
<svg style="left:390px;top:57px" width="15" height="15" shape-rendering="crispEdges"><rect x="0" y="0" width="8" height="1" fill="#3A3030"/><rect x="0" y="1" width="1" height="1" fill="#3A3030"/><rect x="1" y="1" width="6" height="1" fill="#FFFFFF"/><rect x="7" y="1" width="2" height="1" fill="#3A3030"/><rect x="0" y="2" width="1" height="1" fill="#3A3030"/><rect x="1" y="2" width="6" height="1" fill="#FFFFFF"/><rect x="7" y="2" width="1" height="1" fill="#3A3030"/><rect x="8" y="2" width="1" height="1" fill="#FFFFFF"/><rect x="9" y="2" width="1" height="1" fill="#3A3030"/><rect x="0" y="3" width="1" height="1" fill="#3A3030"/><rect x="1" y="3" width="6" height="1" fill="#FFFFFF"/><rect x="7" y="3" width="3" height="1" fill="#3A3030"/><rect x="0" y="4" width="1" height="1" fill="#3A3030"/><rect x="1" y="4" width="8" height="1" fill="#FFFFFF"/><rect x="9" y="4" width="1" height="1" fill="#3A3030"/><rect x="0" y="5" width="1" height="1" fill="#3A3030"/><rect x="1" y="5" width="4" height="1" fill="#FFFFFF"/><rect x="5" y="5" width="6" height="1" fill="#3A3030"/><rect x="0" y="6" width="1" height="1" fill="#3A3030"/><rect x="1" y="6" width="3" height="1" fill="#FFFFFF"/><rect x="4" y="6" width="1" height="1" fill="#3A3030"/><rect x="5" y="6" width="1" height="1" fill="#C0C0C0"/><rect x="6" y="6" width="1" height="1" fill="#50FFFF"/><rect x="7" y="6" width="3" height="1" fill="#C0C0C0"/><rect x="10" y="6" width="1" height="1" fill="#3A3030"/><rect x="0" y="7" width="1" height="1" fill="#3A3030"/><rect x="1" y="7" width="2" height="1" fill="#FFFFFF"/><rect x="3" y="7" width="1" height="1" fill="#3A3030"/><rect x="4" y="7" width="1" height="1" fill="#C0C0C0"/><rect x="5" y="7" width="4" height="1" fill="#50FFFF"/><rect x="9" y="7" width="2" height="1" fill="#C0C0C0"/><rect x="11" y="7" width="1" height="1" fill="#3A3030"/><rect x="0" y="8" width="1" height="1" fill="#3A3030"/><rect x="1" y="8" width="2" height="1" fill="#FFFFFF"/><rect x="3" y="8" width="1" height="1" fill="#3A3030"/><rect x="4" y="8" width="1" height="1" fill="#C0C0C0"/><rect x="5" y="8" width="2" height="1" fill="#50FFFF"/><rect x="7" y="8" width="3" height="1" fill="#C0C0C0"/><rect x="10" y="8" width="1" height="1" fill="#3A3030"/><rect x="0" y="9" width="1" height="1" fill="#3A3030"/><rect x="1" y="9" width="2" height="1" fill="#FFFFFF"/><rect x="3" y="9" width="1" height="1" fill="#3A3030"/><rect x="4" y="9" width="2" height="1" fill="#C0C0C0"/><rect x="6" y="9" width="2" height="1" fill="#50FFFF"/><rect x="8" y="9" width="2" height="1" fill="#C0C0C0"/><rect x="10" y="9" width="1" height="1" fill="#3A3030"/><rect x="0" y="10" width="1" height="1" fill="#3A3030"/><rect x="1" y="10" width="2" height="1" fill="#FFFFFF"/><rect x="3" y="10" width="1" height="1" fill="#3A3030"/><rect x="4" y="10" width="6" height="1" fill="#C0C0C0"/><rect x="10" y="10" width="1" height="1" fill="#3A3030"/><rect x="0" y="11" width="1" height="1" fill="#3A3030"/><rect x="1" y="11" width="3" height="1" fill="#FFFFFF"/><rect x="4" y="11" width="1" height="1" fill="#3A3030"/><rect x="5" y="11" width="5" height="1" fill="#C0C0C0"/><rect x="10" y="11" width="1" height="1" fill="#3A3030"/><rect x="0" y="12" width="1" height="1" fill="#3A3030"/><rect x="1" y="12" width="4" height="1" fill="#FFFFFF"/><rect x="5" y="12" width="7" height="1" fill="#3A3030"/><rect x="0" y="13" width="13" height="1" fill="#3A3030"/><rect x="13" y="13" width="1" height="1" fill="#000000"/><rect x="12" y="14" width="1" height="1" fill="#3A3030"/><rect x="13" y="14" width="2" height="1" fill="#000000"/></svg>
<svg style="left:413px;top:57px" width="16" height="13" shape-rendering="crispEdges"><rect x="3" y="0" width="10" height="1" fill="#3A3030"/><rect x="3" y="1" width="1" height="1" fill="#3A3030"/><rect x="4" y="1" width="8" height="1" fill="#FFFFFF"/><rect x="12" y="1" width="1" height="1" fill="#3A3030"/><rect x="3" y="2" width="1" height="1" fill="#3A3030"/><rect x="4" y="2" width="1" height="1" fill="#FFFFFF"/><rect x="5" y="2" width="6" height="1" fill="#3A3030"/><rect x="11" y="2" width="1" height="1" fill="#FFFFFF"/><rect x="12" y="2" width="1" height="1" fill="#3A3030"/><rect x="2" y="3" width="1" height="1" fill="#3A3030"/><rect x="3" y="3" width="8" height="1" fill="#FFFFFF"/><rect x="11" y="3" width="1" height="1" fill="#3A3030"/><rect x="2" y="4" width="1" height="1" fill="#3A3030"/><rect x="3" y="4" width="1" height="1" fill="#FFFFFF"/><rect x="4" y="4" width="8" height="1" fill="#3A3030"/><rect x="13" y="4" width="1" height="1" fill="#000000"/><rect x="1" y="5" width="11" height="1" fill="#3A3030"/><rect x="12" y="5" width="1" height="1" fill="#000000"/><rect x="13" y="5" width="1" height="1" fill="#FFFFFF"/><rect x="14" y="5" width="1" height="1" fill="#000000"/><rect x="0" y="6" width="1" height="1" fill="#3A3030"/><rect x="1" y="6" width="11" height="1" fill="#FFFFFF"/><rect x="12" y="6" width="1" height="1" fill="#3A3030"/><rect x="13" y="6" width="1" height="1" fill="#FFFFFF"/><rect x="14" y="6" width="1" height="1" fill="#000000"/><rect x="15" y="6" width="1" height="1" fill="#3A3030"/><rect x="0" y="7" width="13" height="1" fill="#3A3030"/><rect x="13" y="7" width="1" height="1" fill="#000000"/><rect x="14" y="7" width="2" height="1" fill="#3A3030"/><rect x="0" y="8" width="1" height="1" fill="#3A3030"/><rect x="1" y="8" width="13" height="1" fill="#D8D8D8"/><rect x="14" y="8" width="2" height="1" fill="#3A3030"/><rect x="0" y="9" width="1" height="1" fill="#3A3030"/><rect x="1" y="9" width="8" height="1" fill="#D8D8D8"/><rect x="9" y="9" width="3" height="1" fill="#FFFF00"/><rect x="12" y="9" width="2" height="1" fill="#D8D8D8"/><rect x="14" y="9" width="2" height="1" fill="#3A3030"/><rect x="0" y="10" width="16" height="1" fill="#3A3030"/><rect x="0" y="11" width="1" height="1" fill="#3A3030"/><rect x="1" y="11" width="14" height="1" fill="#D8D8D8"/><rect x="15" y="11" width="1" height="1" fill="#3A3030"/><rect x="1" y="12" width="14" height="1" fill="#3A3030"/></svg>
<svg style="left:436px;top:57px" width="17" height="14" shape-rendering="crispEdges"><rect x="6" y="0" width="4" height="1" fill="#F04848"/><rect x="7" y="1" width="5" height="1" fill="#F04848"/><rect x="2" y="2" width="4" height="1" fill="#3A3030"/><rect x="9" y="2" width="4" height="1" fill="#F04848"/><rect x="1" y="3" width="1" height="1" fill="#3A3030"/><rect x="2" y="3" width="4" height="1" fill="#FFFFFF"/><rect x="6" y="3" width="1" height="1" fill="#3A3030"/><rect x="8" y="3" width="6" height="1" fill="#F04848"/><rect x="0" y="4" width="1" height="1" fill="#3A3030"/><rect x="1" y="4" width="6" height="1" fill="#FFFFFF"/><rect x="7" y="4" width="1" height="1" fill="#3A3030"/><rect x="10" y="4" width="3" height="1" fill="#F04848"/><rect x="0" y="5" width="1" height="1" fill="#3A3030"/><rect x="1" y="5" width="1" height="1" fill="#FFFFFF"/><rect x="2" y="5" width="3" height="1" fill="#C0C0C0"/><rect x="5" y="5" width="3" height="1" fill="#FFFFFF"/><rect x="8" y="5" width="1" height="1" fill="#3A3030"/><rect x="9" y="5" width="6" height="1" fill="#808080"/><rect x="0" y="6" width="1" height="1" fill="#3A3030"/><rect x="1" y="6" width="6" height="1" fill="#FFFFFF"/><rect x="7" y="6" width="1" height="1" fill="#3A3030"/><rect x="8" y="6" width="1" height="1" fill="#808080"/><rect x="9" y="6" width="6" height="1" fill="#FFFFFF"/><rect x="15" y="6" width="1" height="1" fill="#808080"/><rect x="0" y="7" width="1" height="1" fill="#3A3030"/><rect x="1" y="7" width="5" height="1" fill="#FFFFFF"/><rect x="6" y="7" width="1" height="1" fill="#38A848"/><rect x="7" y="7" width="1" height="1" fill="#3A3030"/><rect x="8" y="7" width="1" height="1" fill="#808080"/><rect x="9" y="7" width="1" height="1" fill="#FFFFFF"/><rect x="10" y="7" width="4" height="1" fill="#C0C0C0"/><rect x="14" y="7" width="1" height="1" fill="#FFFFFF"/><rect x="15" y="7" width="1" height="1" fill="#808080"/><rect x="0" y="8" width="1" height="1" fill="#3A3030"/><rect x="1" y="8" width="4" height="1" fill="#FFFFFF"/><rect x="5" y="8" width="2" height="1" fill="#38A848"/><rect x="7" y="8" width="1" height="1" fill="#3A3030"/><rect x="8" y="8" width="1" height="1" fill="#808080"/><rect x="9" y="8" width="6" height="1" fill="#FFFFFF"/><rect x="15" y="8" width="1" height="1" fill="#808080"/><rect x="0" y="9" width="1" height="1" fill="#3A3030"/><rect x="1" y="9" width="5" height="1" fill="#FFFFFF"/><rect x="6" y="9" width="1" height="1" fill="#38A848"/><rect x="7" y="9" width="1" height="1" fill="#3A3030"/><rect x="8" y="9" width="1" height="1" fill="#808080"/><rect x="9" y="9" width="1" height="1" fill="#FFFFFF"/><rect x="10" y="9" width="4" height="1" fill="#C0C0C0"/><rect x="14" y="9" width="1" height="1" fill="#FFFFFF"/><rect x="15" y="9" width="1" height="1" fill="#808080"/><rect x="0" y="10" width="1" height="1" fill="#3A3030"/><rect x="1" y="10" width="6" height="1" fill="#FFFFFF"/><rect x="7" y="10" width="1" height="1" fill="#3A3030"/><rect x="8" y="10" width="1" height="1" fill="#808080"/><rect x="9" y="10" width="6" height="1" fill="#FFFFFF"/><rect x="15" y="10" width="1" height="1" fill="#808080"/><rect x="0" y="11" width="1" height="1" fill="#3A3030"/><rect x="1" y="11" width="6" height="1" fill="#FFFFFF"/><rect x="7" y="11" width="1" height="1" fill="#3A3030"/><rect x="8" y="11" width="1" height="1" fill="#808080"/><rect x="9" y="11" width="1" height="1" fill="#FFFFFF"/><rect x="10" y="11" width="4" height="1" fill="#C0C0C0"/><rect x="14" y="11" width="1" height="1" fill="#FFFFFF"/><rect x="15" y="11" width="1" height="1" fill="#808080"/><rect x="1" y="12" width="1" height="1" fill="#3A3030"/><rect x="2" y="12" width="5" height="1" fill="#FFFFFF"/><rect x="7" y="12" width="1" height="1" fill="#3A3030"/><rect x="8" y="12" width="1" height="1" fill="#808080"/><rect x="9" y="12" width="6" height="1" fill="#FFFFFF"/><rect x="15" y="12" width="1" height="1" fill="#808080"/><rect x="2" y="13" width="6" height="1" fill="#3A3030"/><rect x="8" y="13" width="8" height="1" fill="#808080"/></svg>
<div class="ab" style="left:458px;top:56px;width:1px;height:18px;background:#C5C2B2"></div>
<div class="ab" style="left:459px;top:56px;width:1px;height:18px;background:#fff"></div>
<svg style="left:464px;top:58px" width="16" height="13" shape-rendering="crispEdges"><rect x="0" y="0" width="16" height="1" fill="#3A3030"/><rect x="0" y="1" width="1" height="1" fill="#3A3030"/><rect x="1" y="1" width="14" height="1" fill="#4060A0"/><rect x="15" y="1" width="1" height="1" fill="#3A3030"/><rect x="0" y="2" width="1" height="1" fill="#3A3030"/><rect x="1" y="2" width="14" height="1" fill="#FFFFFF"/><rect x="15" y="2" width="1" height="1" fill="#3A3030"/><rect x="0" y="3" width="1" height="1" fill="#3A3030"/><rect x="1" y="3" width="1" height="1" fill="#FFFFFF"/><rect x="2" y="3" width="2" height="1" fill="#3030B0"/><rect x="4" y="3" width="2" height="1" fill="#FFFFFF"/><rect x="6" y="3" width="2" height="1" fill="#000000"/><rect x="8" y="3" width="2" height="1" fill="#FFFFFF"/><rect x="10" y="3" width="2" height="1" fill="#3030B0"/><rect x="12" y="3" width="3" height="1" fill="#FFFFFF"/><rect x="15" y="3" width="1" height="1" fill="#3A3030"/><rect x="0" y="4" width="1" height="1" fill="#3A3030"/><rect x="1" y="4" width="1" height="1" fill="#FFFFFF"/><rect x="2" y="4" width="2" height="1" fill="#3030B0"/><rect x="4" y="4" width="6" height="1" fill="#FFFFFF"/><rect x="10" y="4" width="2" height="1" fill="#3030B0"/><rect x="12" y="4" width="3" height="1" fill="#FFFFFF"/><rect x="15" y="4" width="1" height="1" fill="#3A3030"/><rect x="0" y="5" width="1" height="1" fill="#3A3030"/><rect x="1" y="5" width="1" height="1" fill="#FFFFFF"/><rect x="2" y="5" width="2" height="1" fill="#3030B0"/><rect x="4" y="5" width="2" height="1" fill="#FFFFFF"/><rect x="6" y="5" width="2" height="1" fill="#000000"/><rect x="8" y="5" width="2" height="1" fill="#FFFFFF"/><rect x="10" y="5" width="2" height="1" fill="#3030B0"/><rect x="12" y="5" width="3" height="1" fill="#FFFFFF"/><rect x="15" y="5" width="1" height="1" fill="#3A3030"/><rect x="0" y="6" width="1" height="1" fill="#3A3030"/><rect x="1" y="6" width="14" height="1" fill="#FFFFFF"/><rect x="15" y="6" width="1" height="1" fill="#3A3030"/><rect x="0" y="7" width="1" height="1" fill="#3A3030"/><rect x="1" y="7" width="1" height="1" fill="#FFFFFF"/><rect x="2" y="7" width="2" height="1" fill="#3030B0"/><rect x="4" y="7" width="2" height="1" fill="#FFFFFF"/><rect x="6" y="7" width="2" height="1" fill="#000000"/><rect x="8" y="7" width="2" height="1" fill="#FFFFFF"/><rect x="10" y="7" width="2" height="1" fill="#3030B0"/><rect x="12" y="7" width="3" height="1" fill="#FFFFFF"/><rect x="15" y="7" width="1" height="1" fill="#3A3030"/><rect x="0" y="8" width="1" height="1" fill="#3A3030"/><rect x="1" y="8" width="14" height="1" fill="#FFFFFF"/><rect x="15" y="8" width="1" height="1" fill="#3A3030"/><rect x="0" y="9" width="1" height="1" fill="#3A3030"/><rect x="1" y="9" width="1" height="1" fill="#FFFFFF"/><rect x="2" y="9" width="2" height="1" fill="#3030B0"/><rect x="4" y="9" width="2" height="1" fill="#FFFFFF"/><rect x="6" y="9" width="2" height="1" fill="#000000"/><rect x="8" y="9" width="2" height="1" fill="#FFFFFF"/><rect x="10" y="9" width="2" height="1" fill="#3030B0"/><rect x="12" y="9" width="3" height="1" fill="#FFFFFF"/><rect x="15" y="9" width="1" height="1" fill="#3A3030"/><rect x="0" y="10" width="1" height="1" fill="#3A3030"/><rect x="1" y="10" width="14" height="1" fill="#FFFFFF"/><rect x="15" y="10" width="1" height="1" fill="#3A3030"/><rect x="0" y="11" width="1" height="1" fill="#3A3030"/><rect x="1" y="11" width="14" height="1" fill="#FFFFFF"/><rect x="15" y="11" width="1" height="1" fill="#3A3030"/><rect x="0" y="12" width="16" height="1" fill="#3A3030"/></svg>
<svg style="left:487px;top:58px" width="16" height="13" shape-rendering="crispEdges"><rect x="0" y="0" width="16" height="1" fill="#3A3030"/><rect x="0" y="1" width="1" height="1" fill="#3A3030"/><rect x="1" y="1" width="14" height="1" fill="#4060A0"/><rect x="15" y="1" width="1" height="1" fill="#3A3030"/><rect x="0" y="2" width="1" height="1" fill="#3A3030"/><rect x="1" y="2" width="14" height="1" fill="#FFFFFF"/><rect x="15" y="2" width="1" height="1" fill="#3A3030"/><rect x="0" y="3" width="1" height="1" fill="#3A3030"/><rect x="1" y="3" width="1" height="1" fill="#FFFFFF"/><rect x="2" y="3" width="3" height="1" fill="#3030B0"/><rect x="5" y="3" width="10" height="1" fill="#FFFFFF"/><rect x="15" y="3" width="1" height="1" fill="#3A3030"/><rect x="0" y="4" width="1" height="1" fill="#3A3030"/><rect x="1" y="4" width="1" height="1" fill="#FFFFFF"/><rect x="2" y="4" width="1" height="1" fill="#3030B0"/><rect x="3" y="4" width="2" height="1" fill="#FFFFFF"/><rect x="5" y="4" width="1" height="1" fill="#3030B0"/><rect x="6" y="4" width="9" height="1" fill="#FFFFFF"/><rect x="15" y="4" width="1" height="1" fill="#3A3030"/><rect x="0" y="5" width="1" height="1" fill="#3A3030"/><rect x="1" y="5" width="1" height="1" fill="#FFFFFF"/><rect x="2" y="5" width="1" height="1" fill="#3030B0"/><rect x="3" y="5" width="2" height="1" fill="#FFFFFF"/><rect x="5" y="5" width="1" height="1" fill="#3030B0"/><rect x="6" y="5" width="2" height="1" fill="#FFFFFF"/><rect x="8" y="5" width="3" height="1" fill="#3030B0"/><rect x="11" y="5" width="4" height="1" fill="#FFFFFF"/><rect x="15" y="5" width="1" height="1" fill="#3A3030"/><rect x="0" y="6" width="1" height="1" fill="#3A3030"/><rect x="1" y="6" width="1" height="1" fill="#FFFFFF"/><rect x="2" y="6" width="4" height="1" fill="#3030B0"/><rect x="6" y="6" width="2" height="1" fill="#FFFFFF"/><rect x="8" y="6" width="1" height="1" fill="#3030B0"/><rect x="9" y="6" width="2" height="1" fill="#FFFFFF"/><rect x="11" y="6" width="1" height="1" fill="#3030B0"/><rect x="12" y="6" width="3" height="1" fill="#FFFFFF"/><rect x="15" y="6" width="1" height="1" fill="#3A3030"/><rect x="0" y="7" width="1" height="1" fill="#3A3030"/><rect x="1" y="7" width="7" height="1" fill="#FFFFFF"/><rect x="8" y="7" width="1" height="1" fill="#3030B0"/><rect x="9" y="7" width="2" height="1" fill="#FFFFFF"/><rect x="11" y="7" width="1" height="1" fill="#3030B0"/><rect x="12" y="7" width="3" height="1" fill="#FFFFFF"/><rect x="15" y="7" width="1" height="1" fill="#3A3030"/><rect x="0" y="8" width="1" height="1" fill="#3A3030"/><rect x="1" y="8" width="1" height="1" fill="#FFFFFF"/><rect x="2" y="8" width="4" height="1" fill="#3A3030"/><rect x="6" y="8" width="2" height="1" fill="#FFFFFF"/><rect x="8" y="8" width="4" height="1" fill="#3030B0"/><rect x="12" y="8" width="3" height="1" fill="#FFFFFF"/><rect x="15" y="8" width="1" height="1" fill="#3A3030"/><rect x="0" y="9" width="1" height="1" fill="#3A3030"/><rect x="1" y="9" width="14" height="1" fill="#FFFFFF"/><rect x="15" y="9" width="1" height="1" fill="#3A3030"/><rect x="0" y="10" width="1" height="1" fill="#3A3030"/><rect x="1" y="10" width="7" height="1" fill="#FFFFFF"/><rect x="8" y="10" width="4" height="1" fill="#3A3030"/><rect x="12" y="10" width="3" height="1" fill="#FFFFFF"/><rect x="15" y="10" width="1" height="1" fill="#3A3030"/><rect x="0" y="11" width="1" height="1" fill="#3A3030"/><rect x="1" y="11" width="14" height="1" fill="#FFFFFF"/><rect x="15" y="11" width="1" height="1" fill="#3A3030"/><rect x="0" y="12" width="16" height="1" fill="#3A3030"/></svg>
<div class="ab" style="left:509px;top:56px;width:1px;height:18px;background:#C5C2B2"></div>
<div class="ab" style="left:510px;top:56px;width:1px;height:18px;background:#fff"></div>
<svg style="left:519px;top:58px" width="8" height="14" shape-rendering="crispEdges"><rect x="2" y="0" width="3" height="1" fill="#3A3030"/><rect x="1" y="1" width="1" height="1" fill="#3A3030"/><rect x="5" y="1" width="1" height="1" fill="#3A3030"/><rect x="0" y="2" width="1" height="1" fill="#3A3030"/><rect x="3" y="2" width="1" height="1" fill="#3A3030"/><rect x="6" y="2" width="1" height="1" fill="#3A3030"/><rect x="0" y="3" width="1" height="1" fill="#3A3030"/><rect x="2" y="3" width="1" height="1" fill="#3A3030"/><rect x="4" y="3" width="1" height="1" fill="#3A3030"/><rect x="6" y="3" width="1" height="1" fill="#3A3030"/><rect x="0" y="4" width="1" height="1" fill="#3A3030"/><rect x="2" y="4" width="1" height="1" fill="#3A3030"/><rect x="4" y="4" width="1" height="1" fill="#3A3030"/><rect x="6" y="4" width="1" height="1" fill="#3A3030"/><rect x="0" y="5" width="1" height="1" fill="#3A3030"/><rect x="2" y="5" width="1" height="1" fill="#3A3030"/><rect x="4" y="5" width="1" height="1" fill="#3A3030"/><rect x="6" y="5" width="1" height="1" fill="#3A3030"/><rect x="0" y="6" width="1" height="1" fill="#3A3030"/><rect x="2" y="6" width="1" height="1" fill="#3A3030"/><rect x="4" y="6" width="1" height="1" fill="#3A3030"/><rect x="6" y="6" width="1" height="1" fill="#3A3030"/><rect x="0" y="7" width="1" height="1" fill="#3A3030"/><rect x="2" y="7" width="1" height="1" fill="#3A3030"/><rect x="4" y="7" width="1" height="1" fill="#3A3030"/><rect x="6" y="7" width="1" height="1" fill="#3A3030"/><rect x="0" y="8" width="1" height="1" fill="#3A3030"/><rect x="2" y="8" width="1" height="1" fill="#3A3030"/><rect x="4" y="8" width="1" height="1" fill="#3A3030"/><rect x="6" y="8" width="1" height="1" fill="#3A3030"/><rect x="0" y="9" width="1" height="1" fill="#3A3030"/><rect x="2" y="9" width="3" height="1" fill="#3A3030"/><rect x="6" y="9" width="1" height="1" fill="#3A3030"/><rect x="0" y="10" width="1" height="1" fill="#3A3030"/><rect x="6" y="10" width="1" height="1" fill="#3A3030"/><rect x="0" y="11" width="1" height="1" fill="#3A3030"/><rect x="6" y="11" width="1" height="1" fill="#3A3030"/><rect x="1" y="12" width="1" height="1" fill="#3A3030"/><rect x="5" y="12" width="1" height="1" fill="#3A3030"/><rect x="2" y="13" width="3" height="1" fill="#3A3030"/></svg>
<svg style="left:801px;top:58px" width="12" height="13" shape-rendering="crispEdges"><rect x="0" y="0" width="8" height="1" fill="#808080"/><rect x="0" y="1" width="1" height="1" fill="#808080"/><rect x="1" y="1" width="6" height="1" fill="#FFFFFF"/><rect x="7" y="1" width="1" height="1" fill="#808080"/><rect x="8" y="1" width="2" height="1" fill="#3A3030"/><rect x="0" y="2" width="1" height="1" fill="#808080"/><rect x="1" y="2" width="1" height="1" fill="#FFFFFF"/><rect x="2" y="2" width="3" height="1" fill="#C0C0C0"/><rect x="5" y="2" width="2" height="1" fill="#FFFFFF"/><rect x="7" y="2" width="1" height="1" fill="#3A3030"/><rect x="8" y="2" width="1" height="1" fill="#FFFFFF"/><rect x="9" y="2" width="1" height="1" fill="#3A3030"/><rect x="0" y="3" width="1" height="1" fill="#808080"/><rect x="1" y="3" width="2" height="1" fill="#FFFFFF"/><rect x="3" y="3" width="2" height="1" fill="#3030FF"/><rect x="5" y="3" width="2" height="1" fill="#FFFFFF"/><rect x="7" y="3" width="3" height="1" fill="#3A3030"/><rect x="0" y="4" width="1" height="1" fill="#808080"/><rect x="1" y="4" width="2" height="1" fill="#FFFFFF"/><rect x="3" y="4" width="2" height="1" fill="#3030FF"/><rect x="5" y="4" width="4" height="1" fill="#FFFFFF"/><rect x="9" y="4" width="2" height="1" fill="#3A3030"/><rect x="0" y="5" width="1" height="1" fill="#808080"/><rect x="1" y="5" width="9" height="1" fill="#FFFFFF"/><rect x="10" y="5" width="1" height="1" fill="#3A3030"/><rect x="0" y="6" width="1" height="1" fill="#808080"/><rect x="1" y="6" width="1" height="1" fill="#FFFFFF"/><rect x="2" y="6" width="3" height="1" fill="#3030FF"/><rect x="5" y="6" width="2" height="1" fill="#FFFFFF"/><rect x="7" y="6" width="2" height="1" fill="#C0C0C0"/><rect x="9" y="6" width="1" height="1" fill="#FFFFFF"/><rect x="10" y="6" width="1" height="1" fill="#3A3030"/><rect x="0" y="7" width="1" height="1" fill="#808080"/><rect x="1" y="7" width="2" height="1" fill="#FFFFFF"/><rect x="3" y="7" width="2" height="1" fill="#3030FF"/><rect x="5" y="7" width="5" height="1" fill="#FFFFFF"/><rect x="10" y="7" width="1" height="1" fill="#3A3030"/><rect x="0" y="8" width="1" height="1" fill="#808080"/><rect x="1" y="8" width="2" height="1" fill="#FFFFFF"/><rect x="3" y="8" width="2" height="1" fill="#3030FF"/><rect x="5" y="8" width="2" height="1" fill="#FFFFFF"/><rect x="7" y="8" width="2" height="1" fill="#C0C0C0"/><rect x="9" y="8" width="1" height="1" fill="#FFFFFF"/><rect x="10" y="8" width="1" height="1" fill="#3A3030"/><rect x="0" y="9" width="1" height="1" fill="#808080"/><rect x="1" y="9" width="2" height="1" fill="#FFFFFF"/><rect x="3" y="9" width="2" height="1" fill="#3030FF"/><rect x="5" y="9" width="5" height="1" fill="#FFFFFF"/><rect x="10" y="9" width="1" height="1" fill="#3A3030"/><rect x="0" y="10" width="1" height="1" fill="#808080"/><rect x="1" y="10" width="1" height="1" fill="#FFFFFF"/><rect x="2" y="10" width="4" height="1" fill="#3030FF"/><rect x="6" y="10" width="2" height="1" fill="#FFFFFF"/><rect x="8" y="10" width="1" height="1" fill="#C0C0C0"/><rect x="9" y="10" width="1" height="1" fill="#FFFFFF"/><rect x="10" y="10" width="1" height="1" fill="#3A3030"/><rect x="0" y="11" width="1" height="1" fill="#808080"/><rect x="1" y="11" width="9" height="1" fill="#FFFFFF"/><rect x="10" y="11" width="1" height="1" fill="#3A3030"/><rect x="0" y="12" width="1" height="1" fill="#808080"/><rect x="1" y="12" width="11" height="1" fill="#3A3030"/></svg>
<div class="ab" style="left:6px;top:78px;width:813px;height:21px;background:#ACA899"></div>
<div class="t" style="left:14px;top:78px;font:17px/21px 'Liberation Sans';color:#FFFFFF;transform:scaleX(1.093);transform-origin:0 0">Формализация документа "Дело приватизации"</div>
<div class="t" style="left:705px;top:82px;font:bold 12px/14px 'Liberation Sans';color:#FFFFFF;transform:scaleX(1.09);transform-origin:0 0">ID=1270370</div>
<div class="ab" style="left:6px;top:101px;width:250px;height:444px;border:1px solid #7A96DF;background:#fff"></div>
<div class="ab" style="left:7px;top:102px;width:248px;height:18px;background:#ECE9D8;border-bottom:1px solid #7A96DF"></div>
<div class="m" style="left:10px;top:104px;color:#000;transform:scaleX(0.96)">Навигатор</div>
<div class="ab" style="left:39px;top:120px;width:216px;height:16px;background:#ECE9D8"></div>
<div class="ab" style="left:10px;top:124px;width:9px;height:9px;border:1px solid #ACA899;background:#fff"></div>
<div class="ab" style="left:12px;top:128px;width:5px;height:1px;background:#000"></div>
<svg style="left:20px;top:128px" width="4" height="1" shape-rendering="crispEdges"><rect x="0" y="0" width="1" height="1" fill="#A0A0A0"/><rect x="2" y="0" width="1" height="1" fill="#A0A0A0"/></svg>
<svg style="left:30px;top:136px" width="1" height="136" shape-rendering="crispEdges"><rect x="0" y="0" width="1" height="1" fill="#A0A0A0"/><rect x="0" y="2" width="1" height="1" fill="#A0A0A0"/><rect x="0" y="4" width="1" height="1" fill="#A0A0A0"/><rect x="0" y="6" width="1" height="1" fill="#A0A0A0"/><rect x="0" y="8" width="1" height="1" fill="#A0A0A0"/><rect x="0" y="10" width="1" height="1" fill="#A0A0A0"/><rect x="0" y="12" width="1" height="1" fill="#A0A0A0"/><rect x="0" y="14" width="1" height="1" fill="#A0A0A0"/><rect x="0" y="16" width="1" height="1" fill="#A0A0A0"/><rect x="0" y="18" width="1" height="1" fill="#A0A0A0"/><rect x="0" y="20" width="1" height="1" fill="#A0A0A0"/><rect x="0" y="22" width="1" height="1" fill="#A0A0A0"/><rect x="0" y="24" width="1" height="1" fill="#A0A0A0"/><rect x="0" y="26" width="1" height="1" fill="#A0A0A0"/><rect x="0" y="28" width="1" height="1" fill="#A0A0A0"/><rect x="0" y="30" width="1" height="1" fill="#A0A0A0"/><rect x="0" y="32" width="1" height="1" fill="#A0A0A0"/><rect x="0" y="34" width="1" height="1" fill="#A0A0A0"/><rect x="0" y="36" width="1" height="1" fill="#A0A0A0"/><rect x="0" y="38" width="1" height="1" fill="#A0A0A0"/><rect x="0" y="40" width="1" height="1" fill="#A0A0A0"/><rect x="0" y="42" width="1" height="1" fill="#A0A0A0"/><rect x="0" y="44" width="1" height="1" fill="#A0A0A0"/><rect x="0" y="46" width="1" height="1" fill="#A0A0A0"/><rect x="0" y="48" width="1" height="1" fill="#A0A0A0"/><rect x="0" y="50" width="1" height="1" fill="#A0A0A0"/><rect x="0" y="52" width="1" height="1" fill="#A0A0A0"/><rect x="0" y="54" width="1" height="1" fill="#A0A0A0"/><rect x="0" y="56" width="1" height="1" fill="#A0A0A0"/><rect x="0" y="58" width="1" height="1" fill="#A0A0A0"/><rect x="0" y="60" width="1" height="1" fill="#A0A0A0"/><rect x="0" y="62" width="1" height="1" fill="#A0A0A0"/><rect x="0" y="64" width="1" height="1" fill="#A0A0A0"/><rect x="0" y="66" width="1" height="1" fill="#A0A0A0"/><rect x="0" y="68" width="1" height="1" fill="#A0A0A0"/><rect x="0" y="70" width="1" height="1" fill="#A0A0A0"/><rect x="0" y="72" width="1" height="1" fill="#A0A0A0"/><rect x="0" y="74" width="1" height="1" fill="#A0A0A0"/><rect x="0" y="76" width="1" height="1" fill="#A0A0A0"/><rect x="0" y="78" width="1" height="1" fill="#A0A0A0"/><rect x="0" y="80" width="1" height="1" fill="#A0A0A0"/><rect x="0" y="82" width="1" height="1" fill="#A0A0A0"/><rect x="0" y="84" width="1" height="1" fill="#A0A0A0"/><rect x="0" y="86" width="1" height="1" fill="#A0A0A0"/><rect x="0" y="88" width="1" height="1" fill="#A0A0A0"/><rect x="0" y="90" width="1" height="1" fill="#A0A0A0"/><rect x="0" y="92" width="1" height="1" fill="#A0A0A0"/><rect x="0" y="94" width="1" height="1" fill="#A0A0A0"/><rect x="0" y="96" width="1" height="1" fill="#A0A0A0"/><rect x="0" y="98" width="1" height="1" fill="#A0A0A0"/><rect x="0" y="100" width="1" height="1" fill="#A0A0A0"/><rect x="0" y="102" width="1" height="1" fill="#A0A0A0"/><rect x="0" y="104" width="1" height="1" fill="#A0A0A0"/><rect x="0" y="106" width="1" height="1" fill="#A0A0A0"/><rect x="0" y="108" width="1" height="1" fill="#A0A0A0"/><rect x="0" y="110" width="1" height="1" fill="#A0A0A0"/><rect x="0" y="112" width="1" height="1" fill="#A0A0A0"/><rect x="0" y="114" width="1" height="1" fill="#A0A0A0"/><rect x="0" y="116" width="1" height="1" fill="#A0A0A0"/><rect x="0" y="118" width="1" height="1" fill="#A0A0A0"/><rect x="0" y="120" width="1" height="1" fill="#A0A0A0"/><rect x="0" y="122" width="1" height="1" fill="#A0A0A0"/><rect x="0" y="124" width="1" height="1" fill="#A0A0A0"/><rect x="0" y="126" width="1" height="1" fill="#A0A0A0"/><rect x="0" y="128" width="1" height="1" fill="#A0A0A0"/><rect x="0" y="130" width="1" height="1" fill="#A0A0A0"/><rect x="0" y="132" width="1" height="1" fill="#A0A0A0"/><rect x="0" y="134" width="1" height="1" fill="#A0A0A0"/></svg>
<svg style="left:24px;top:123px" width="13" height="13" shape-rendering="crispEdges"><rect x="3" y="0" width="8" height="1" fill="#808080"/><rect x="2" y="1" width="1" height="1" fill="#808080"/><rect x="3" y="1" width="8" height="1" fill="#C0C0C0"/><rect x="1" y="2" width="9" height="1" fill="#808080"/><rect x="0" y="3" width="1" height="10" fill="#000"/><rect x="0" y="12" width="10" height="1" fill="#000"/><rect x="1" y="3" width="9" height="9" fill="#fff"/><rect x="10" y="1" width="1" height="12" fill="#000"/><rect x="11" y="2" width="1" height="10" fill="#000"/><rect x="12" y="3" width="1" height="8" fill="#000"/><rect x="9" y="0" width="3" height="3" fill="#fff"/><rect x="9" y="0" width="1" height="1" fill="#000"/><rect x="11" y="0" width="1" height="1" fill="#000"/><rect x="10" y="1" width="1" height="1" fill="#000"/><rect x="9" y="2" width="1" height="1" fill="#000"/><rect x="11" y="2" width="1" height="1" fill="#000"/><rect x="1" y="4" width="1" height="1" fill="#FFFF00"/><rect x="1" y="6" width="1" height="1" fill="#FFFF00"/><rect x="1" y="9" width="1" height="1" fill="#FFFF00"/><rect x="1" y="11" width="1" height="1" fill="#FFFF00"/><rect x="3" y="11" width="1" height="1" fill="#FFFF00"/><rect x="5" y="11" width="1" height="1" fill="#FFFF00"/><rect x="7" y="11" width="1" height="1" fill="#FFFF00"/><rect x="9" y="11" width="1" height="1" fill="#FFFF00"/><rect x="5" y="4" width="1" height="1" fill="#FFFF00"/><rect x="6" y="4" width="1" height="1" fill="#FFFF00"/><rect x="8" y="6" width="1" height="1" fill="#FFFF00"/><rect x="9" y="6" width="1" height="1" fill="#FFFF00"/><rect x="9" y="9" width="1" height="1" fill="#FFFF00"/><rect x="2" y="5" width="3" height="1" fill="#808080"/><rect x="2" y="7" width="4" height="1" fill="#808080"/><rect x="2" y="9" width="6" height="1" fill="#808080"/></svg>
<div class="m" style="left:42px;top:121px;color:#000;">ТЕСТОВЫЙ01/ Квартира/ 15.02.2011/ ...</div>
<div class="ab" style="left:26px;top:140px;width:9px;height:9px;border:1px solid #ACA899;background:#fff"></div>
<div class="ab" style="left:28px;top:144px;width:5px;height:1px;background:#000"></div>
<div class="ab" style="left:30px;top:142px;width:1px;height:5px;background:#000"></div>
<svg style="left:36px;top:144px" width="4" height="1" shape-rendering="crispEdges"><rect x="0" y="0" width="1" height="1" fill="#A0A0A0"/><rect x="2" y="0" width="1" height="1" fill="#A0A0A0"/></svg>
<svg style="left:40px;top:137px" width="15" height="15" shape-rendering="crispEdges"><rect x="0" y="0" width="8" height="1" fill="#808080"/><rect x="0" y="0" width="1" height="13" fill="#808080"/><rect x="1" y="1" width="7" height="12" fill="#fff"/><rect x="8" y="0" width="1" height="1" fill="#808080"/><rect x="8" y="1" width="2" height="3" fill="#000"/><rect x="9" y="2" width="1" height="1" fill="#fff"/><rect x="10" y="2" width="1" height="2" fill="#000"/><rect x="10" y="3" width="1" height="6" fill="#000"/><rect x="1" y="13" width="8" height="1" fill="#000"/><rect x="8" y="4" width="2" height="5" fill="#fff"/><rect x="2" y="2" width="4" height="1" fill="#A0A0A0"/><rect x="2" y="4" width="4" height="1" fill="#A0A0A0"/><rect x="2" y="6" width="7" height="1" fill="#A0A0A0"/><rect x="2" y="8" width="4" height="1" fill="#A0A0A0"/><rect x="2" y="10" width="5" height="1" fill="#0000FF"/><rect x="7" y="8" width="7" height="1" fill="#808080"/><rect x="7" y="8" width="1" height="7" fill="#808080"/><rect x="8" y="9" width="6" height="5" fill="#fff"/><rect x="14" y="9" width="1" height="6" fill="#000"/><rect x="8" y="14" width="7" height="1" fill="#000"/><rect x="13" y="8" width="1" height="1" fill="#fff"/><rect x="9" y="10" width="2" height="3" fill="#0000FF"/><rect x="11" y="11" width="1" height="2" fill="#0000FF"/><rect x="12" y="12" width="1" height="1" fill="#0000FF"/></svg>
<div class="m" style="left:57px;top:137px;color:#000;transform:scaleX(0.93)">Филиал ГЖО</div>
<div class="ab" style="left:26px;top:156px;width:9px;height:9px;border:1px solid #ACA899;background:#fff"></div>
<div class="ab" style="left:28px;top:160px;width:5px;height:1px;background:#000"></div>
<div class="ab" style="left:30px;top:158px;width:1px;height:5px;background:#000"></div>
<svg style="left:36px;top:160px" width="4" height="1" shape-rendering="crispEdges"><rect x="0" y="0" width="1" height="1" fill="#A0A0A0"/><rect x="2" y="0" width="1" height="1" fill="#A0A0A0"/></svg>
<svg style="left:40px;top:153px" width="15" height="15" shape-rendering="crispEdges"><rect x="0" y="0" width="8" height="1" fill="#808080"/><rect x="0" y="0" width="1" height="13" fill="#808080"/><rect x="1" y="1" width="7" height="12" fill="#fff"/><rect x="8" y="0" width="1" height="1" fill="#808080"/><rect x="8" y="1" width="2" height="3" fill="#000"/><rect x="9" y="2" width="1" height="1" fill="#fff"/><rect x="10" y="2" width="1" height="2" fill="#000"/><rect x="10" y="3" width="1" height="6" fill="#000"/><rect x="1" y="13" width="8" height="1" fill="#000"/><rect x="8" y="4" width="2" height="5" fill="#fff"/><rect x="2" y="2" width="4" height="1" fill="#A0A0A0"/><rect x="2" y="4" width="4" height="1" fill="#A0A0A0"/><rect x="2" y="6" width="7" height="1" fill="#A0A0A0"/><rect x="2" y="8" width="4" height="1" fill="#A0A0A0"/><rect x="2" y="10" width="5" height="1" fill="#0000FF"/><rect x="7" y="8" width="7" height="1" fill="#808080"/><rect x="7" y="8" width="1" height="7" fill="#808080"/><rect x="8" y="9" width="6" height="5" fill="#fff"/><rect x="14" y="9" width="1" height="6" fill="#000"/><rect x="8" y="14" width="7" height="1" fill="#000"/><rect x="13" y="8" width="1" height="1" fill="#fff"/><rect x="9" y="10" width="2" height="3" fill="#0000FF"/><rect x="11" y="11" width="1" height="2" fill="#0000FF"/><rect x="12" y="12" width="1" height="1" fill="#0000FF"/></svg>
<div class="m" style="left:57px;top:153px;color:#000;transform:scaleX(0.93)">Кто зарегистровал</div>
<svg style="left:32px;top:176px" width="8" height="1" shape-rendering="crispEdges"><rect x="0" y="0" width="1" height="1" fill="#A0A0A0"/><rect x="2" y="0" width="1" height="1" fill="#A0A0A0"/><rect x="4" y="0" width="1" height="1" fill="#A0A0A0"/><rect x="6" y="0" width="1" height="1" fill="#A0A0A0"/></svg>
<svg style="left:40px;top:169px" width="15" height="15" shape-rendering="crispEdges"><rect x="0" y="0" width="8" height="1" fill="#808080"/><rect x="0" y="0" width="1" height="13" fill="#808080"/><rect x="1" y="1" width="7" height="12" fill="#fff"/><rect x="8" y="0" width="1" height="1" fill="#808080"/><rect x="8" y="1" width="2" height="3" fill="#000"/><rect x="9" y="2" width="1" height="1" fill="#fff"/><rect x="10" y="2" width="1" height="2" fill="#000"/><rect x="10" y="3" width="1" height="6" fill="#000"/><rect x="1" y="13" width="8" height="1" fill="#000"/><rect x="8" y="4" width="2" height="5" fill="#fff"/><rect x="2" y="2" width="4" height="1" fill="#A0A0A0"/><rect x="2" y="4" width="4" height="1" fill="#A0A0A0"/><rect x="2" y="6" width="7" height="1" fill="#A0A0A0"/><rect x="2" y="8" width="4" height="1" fill="#A0A0A0"/><rect x="2" y="10" width="5" height="1" fill="#C0C0C0"/><rect x="7" y="8" width="7" height="1" fill="#808080"/><rect x="7" y="8" width="1" height="7" fill="#808080"/><rect x="8" y="9" width="6" height="5" fill="#fff"/><rect x="14" y="9" width="1" height="6" fill="#000"/><rect x="8" y="14" width="7" height="1" fill="#000"/><rect x="13" y="8" width="1" height="1" fill="#fff"/><rect x="9" y="10" width="2" height="3" fill="#C0C0C0"/><rect x="11" y="11" width="1" height="2" fill="#C0C0C0"/><rect x="12" y="12" width="1" height="1" fill="#C0C0C0"/></svg>
<div class="m" style="left:57px;top:169px;color:#000;transform:scaleX(0.93)">Риэлтер</div>
<div class="ab" style="left:26px;top:188px;width:9px;height:9px;border:1px solid #ACA899;background:#fff"></div>
<div class="ab" style="left:28px;top:192px;width:5px;height:1px;background:#000"></div>
<div class="ab" style="left:30px;top:190px;width:1px;height:5px;background:#000"></div>
<svg style="left:36px;top:192px" width="4" height="1" shape-rendering="crispEdges"><rect x="0" y="0" width="1" height="1" fill="#A0A0A0"/><rect x="2" y="0" width="1" height="1" fill="#A0A0A0"/></svg>
<svg style="left:40px;top:185px" width="15" height="15" shape-rendering="crispEdges"><rect x="0" y="0" width="8" height="1" fill="#808080"/><rect x="0" y="0" width="1" height="13" fill="#808080"/><rect x="1" y="1" width="7" height="12" fill="#fff"/><rect x="8" y="0" width="1" height="1" fill="#808080"/><rect x="8" y="1" width="2" height="3" fill="#000"/><rect x="9" y="2" width="1" height="1" fill="#fff"/><rect x="10" y="2" width="1" height="2" fill="#000"/><rect x="10" y="3" width="1" height="6" fill="#000"/><rect x="1" y="13" width="8" height="1" fill="#000"/><rect x="8" y="4" width="2" height="5" fill="#fff"/><rect x="2" y="2" width="4" height="1" fill="#A0A0A0"/><rect x="2" y="4" width="4" height="1" fill="#A0A0A0"/><rect x="2" y="6" width="7" height="1" fill="#A0A0A0"/><rect x="2" y="8" width="4" height="1" fill="#A0A0A0"/><rect x="2" y="10" width="5" height="1" fill="#0000FF"/><rect x="7" y="8" width="7" height="1" fill="#808080"/><rect x="7" y="8" width="1" height="7" fill="#808080"/><rect x="8" y="9" width="6" height="5" fill="#fff"/><rect x="14" y="9" width="1" height="6" fill="#000"/><rect x="8" y="14" width="7" height="1" fill="#000"/><rect x="13" y="8" width="1" height="1" fill="#fff"/><rect x="9" y="10" width="2" height="3" fill="#0000FF"/><rect x="11" y="11" width="1" height="2" fill="#0000FF"/><rect x="12" y="12" width="1" height="1" fill="#0000FF"/></svg>
<div class="m" style="left:57px;top:185px;color:#000;transform:scaleX(0.93)">Описание квартиры</div>
<div class="ab" style="left:26px;top:204px;width:9px;height:9px;border:1px solid #ACA899;background:#fff"></div>
<div class="ab" style="left:28px;top:208px;width:5px;height:1px;background:#000"></div>
<div class="ab" style="left:30px;top:206px;width:1px;height:5px;background:#000"></div>
<svg style="left:36px;top:208px" width="4" height="1" shape-rendering="crispEdges"><rect x="0" y="0" width="1" height="1" fill="#A0A0A0"/><rect x="2" y="0" width="1" height="1" fill="#A0A0A0"/></svg>
<svg style="left:40px;top:201px" width="15" height="15" shape-rendering="crispEdges"><rect x="0" y="0" width="8" height="1" fill="#808080"/><rect x="0" y="0" width="1" height="13" fill="#808080"/><rect x="1" y="1" width="7" height="12" fill="#fff"/><rect x="8" y="0" width="1" height="1" fill="#808080"/><rect x="8" y="1" width="2" height="3" fill="#000"/><rect x="9" y="2" width="1" height="1" fill="#fff"/><rect x="10" y="2" width="1" height="2" fill="#000"/><rect x="10" y="3" width="1" height="6" fill="#000"/><rect x="1" y="13" width="8" height="1" fill="#000"/><rect x="8" y="4" width="2" height="5" fill="#fff"/><rect x="2" y="2" width="4" height="1" fill="#A0A0A0"/><rect x="2" y="4" width="4" height="1" fill="#A0A0A0"/><rect x="2" y="6" width="7" height="1" fill="#A0A0A0"/><rect x="2" y="8" width="4" height="1" fill="#A0A0A0"/><rect x="2" y="10" width="5" height="1" fill="#0000FF"/><rect x="7" y="8" width="7" height="1" fill="#808080"/><rect x="7" y="8" width="1" height="7" fill="#808080"/><rect x="8" y="9" width="6" height="5" fill="#fff"/><rect x="14" y="9" width="1" height="6" fill="#000"/><rect x="8" y="14" width="7" height="1" fill="#000"/><rect x="13" y="8" width="1" height="1" fill="#fff"/><rect x="9" y="10" width="2" height="3" fill="#0000FF"/><rect x="11" y="11" width="1" height="2" fill="#0000FF"/><rect x="12" y="12" width="1" height="1" fill="#0000FF"/></svg>
<div class="m" style="left:57px;top:201px;color:#000;transform:scaleX(0.93)">Перечень приватизируемых комнат</div>
<div class="ab" style="left:26px;top:220px;width:9px;height:9px;border:1px solid #ACA899;background:#fff"></div>
<div class="ab" style="left:28px;top:224px;width:5px;height:1px;background:#000"></div>
<div class="ab" style="left:30px;top:222px;width:1px;height:5px;background:#000"></div>
<svg style="left:36px;top:224px" width="4" height="1" shape-rendering="crispEdges"><rect x="0" y="0" width="1" height="1" fill="#A0A0A0"/><rect x="2" y="0" width="1" height="1" fill="#A0A0A0"/></svg>
<svg style="left:40px;top:217px" width="15" height="15" shape-rendering="crispEdges"><rect x="0" y="0" width="8" height="1" fill="#808080"/><rect x="0" y="0" width="1" height="13" fill="#808080"/><rect x="1" y="1" width="7" height="12" fill="#fff"/><rect x="8" y="0" width="1" height="1" fill="#808080"/><rect x="8" y="1" width="2" height="3" fill="#000"/><rect x="9" y="2" width="1" height="1" fill="#fff"/><rect x="10" y="2" width="1" height="2" fill="#000"/><rect x="10" y="3" width="1" height="6" fill="#000"/><rect x="1" y="13" width="8" height="1" fill="#000"/><rect x="8" y="4" width="2" height="5" fill="#fff"/><rect x="2" y="2" width="4" height="1" fill="#A0A0A0"/><rect x="2" y="4" width="4" height="1" fill="#A0A0A0"/><rect x="2" y="6" width="7" height="1" fill="#A0A0A0"/><rect x="2" y="8" width="4" height="1" fill="#A0A0A0"/><rect x="2" y="10" width="5" height="1" fill="#0000FF"/><rect x="7" y="8" width="7" height="1" fill="#808080"/><rect x="7" y="8" width="1" height="7" fill="#808080"/><rect x="8" y="9" width="6" height="5" fill="#fff"/><rect x="14" y="9" width="1" height="6" fill="#000"/><rect x="8" y="14" width="7" height="1" fill="#000"/><rect x="13" y="8" width="1" height="1" fill="#fff"/><rect x="9" y="10" width="2" height="3" fill="#0000FF"/><rect x="11" y="11" width="1" height="2" fill="#0000FF"/><rect x="12" y="12" width="1" height="1" fill="#0000FF"/></svg>
<div class="m" style="left:57px;top:217px;color:#000;transform:scaleX(0.93)">Собственники</div>
<svg style="left:32px;top:240px" width="8" height="1" shape-rendering="crispEdges"><rect x="0" y="0" width="1" height="1" fill="#A0A0A0"/><rect x="2" y="0" width="1" height="1" fill="#A0A0A0"/><rect x="4" y="0" width="1" height="1" fill="#A0A0A0"/><rect x="6" y="0" width="1" height="1" fill="#A0A0A0"/></svg>
<svg style="left:40px;top:233px" width="15" height="15" shape-rendering="crispEdges"><rect x="0" y="0" width="8" height="1" fill="#808080"/><rect x="0" y="0" width="1" height="13" fill="#808080"/><rect x="1" y="1" width="7" height="12" fill="#fff"/><rect x="8" y="0" width="1" height="1" fill="#808080"/><rect x="8" y="1" width="2" height="3" fill="#000"/><rect x="9" y="2" width="1" height="1" fill="#fff"/><rect x="10" y="2" width="1" height="2" fill="#000"/><rect x="10" y="3" width="1" height="6" fill="#000"/><rect x="1" y="13" width="8" height="1" fill="#000"/><rect x="8" y="4" width="2" height="5" fill="#fff"/><rect x="2" y="2" width="4" height="1" fill="#A0A0A0"/><rect x="2" y="4" width="4" height="1" fill="#A0A0A0"/><rect x="2" y="6" width="7" height="1" fill="#A0A0A0"/><rect x="2" y="8" width="4" height="1" fill="#A0A0A0"/><rect x="2" y="10" width="5" height="1" fill="#C0C0C0"/><rect x="7" y="8" width="7" height="1" fill="#808080"/><rect x="7" y="8" width="1" height="7" fill="#808080"/><rect x="8" y="9" width="6" height="5" fill="#fff"/><rect x="14" y="9" width="1" height="6" fill="#000"/><rect x="8" y="14" width="7" height="1" fill="#000"/><rect x="13" y="8" width="1" height="1" fill="#fff"/><rect x="9" y="10" width="2" height="3" fill="#C0C0C0"/><rect x="11" y="11" width="1" height="2" fill="#C0C0C0"/><rect x="12" y="12" width="1" height="1" fill="#C0C0C0"/></svg>
<div class="m" style="left:57px;top:233px;color:#000;transform:scaleX(0.93)">События дела</div>
<div class="ab" style="left:26px;top:252px;width:9px;height:9px;border:1px solid #ACA899;background:#fff"></div>
<div class="ab" style="left:28px;top:256px;width:5px;height:1px;background:#000"></div>
<div class="ab" style="left:30px;top:254px;width:1px;height:5px;background:#000"></div>
<svg style="left:36px;top:256px" width="4" height="1" shape-rendering="crispEdges"><rect x="0" y="0" width="1" height="1" fill="#A0A0A0"/><rect x="2" y="0" width="1" height="1" fill="#A0A0A0"/></svg>
<svg style="left:40px;top:249px" width="15" height="15" shape-rendering="crispEdges"><rect x="0" y="0" width="8" height="1" fill="#808080"/><rect x="0" y="0" width="1" height="13" fill="#808080"/><rect x="1" y="1" width="7" height="12" fill="#fff"/><rect x="8" y="0" width="1" height="1" fill="#808080"/><rect x="8" y="1" width="2" height="3" fill="#000"/><rect x="9" y="2" width="1" height="1" fill="#fff"/><rect x="10" y="2" width="1" height="2" fill="#000"/><rect x="10" y="3" width="1" height="6" fill="#000"/><rect x="1" y="13" width="8" height="1" fill="#000"/><rect x="8" y="4" width="2" height="5" fill="#fff"/><rect x="2" y="2" width="4" height="1" fill="#A0A0A0"/><rect x="2" y="4" width="4" height="1" fill="#A0A0A0"/><rect x="2" y="6" width="7" height="1" fill="#A0A0A0"/><rect x="2" y="8" width="4" height="1" fill="#A0A0A0"/><rect x="2" y="10" width="5" height="1" fill="#0000FF"/><rect x="7" y="8" width="7" height="1" fill="#808080"/><rect x="7" y="8" width="1" height="7" fill="#808080"/><rect x="8" y="9" width="6" height="5" fill="#fff"/><rect x="14" y="9" width="1" height="6" fill="#000"/><rect x="8" y="14" width="7" height="1" fill="#000"/><rect x="13" y="8" width="1" height="1" fill="#fff"/><rect x="9" y="10" width="2" height="3" fill="#0000FF"/><rect x="11" y="11" width="1" height="2" fill="#0000FF"/><rect x="12" y="12" width="1" height="1" fill="#0000FF"/></svg>
<div class="m" style="left:57px;top:249px;color:#000;transform:scaleX(0.93)">Документы дела</div>
<svg style="left:32px;top:272px" width="8" height="1" shape-rendering="crispEdges"><rect x="0" y="0" width="1" height="1" fill="#A0A0A0"/><rect x="2" y="0" width="1" height="1" fill="#A0A0A0"/><rect x="4" y="0" width="1" height="1" fill="#A0A0A0"/><rect x="6" y="0" width="1" height="1" fill="#A0A0A0"/></svg>
<svg style="left:40px;top:265px" width="15" height="15" shape-rendering="crispEdges"><rect x="0" y="0" width="8" height="1" fill="#808080"/><rect x="0" y="0" width="1" height="13" fill="#808080"/><rect x="1" y="1" width="7" height="12" fill="#fff"/><rect x="8" y="0" width="1" height="1" fill="#808080"/><rect x="8" y="1" width="2" height="3" fill="#000"/><rect x="9" y="2" width="1" height="1" fill="#fff"/><rect x="10" y="2" width="1" height="2" fill="#000"/><rect x="10" y="3" width="1" height="6" fill="#000"/><rect x="1" y="13" width="8" height="1" fill="#000"/><rect x="8" y="4" width="2" height="5" fill="#fff"/><rect x="2" y="2" width="4" height="1" fill="#A0A0A0"/><rect x="2" y="4" width="4" height="1" fill="#A0A0A0"/><rect x="2" y="6" width="7" height="1" fill="#A0A0A0"/><rect x="2" y="8" width="4" height="1" fill="#A0A0A0"/><rect x="2" y="10" width="5" height="1" fill="#C0C0C0"/><rect x="7" y="8" width="7" height="1" fill="#808080"/><rect x="7" y="8" width="1" height="7" fill="#808080"/><rect x="8" y="9" width="6" height="5" fill="#fff"/><rect x="14" y="9" width="1" height="6" fill="#000"/><rect x="8" y="14" width="7" height="1" fill="#000"/><rect x="13" y="8" width="1" height="1" fill="#fff"/><rect x="9" y="10" width="2" height="3" fill="#C0C0C0"/><rect x="11" y="11" width="1" height="2" fill="#C0C0C0"/><rect x="12" y="12" width="1" height="1" fill="#C0C0C0"/></svg>
<div class="m" style="left:57px;top:265px;color:#000;transform:scaleX(0.93)">Описание по распределению(стар.)</div>
<div class="ab" style="left:257px;top:101px;width:1px;height:443px;background:#808080"></div>
<div class="ab" style="left:260px;top:101px;width:314px;height:19px;border:1px solid #BAB7A7;background:#ECE9D8"></div>
<div class="ab" style="left:261px;top:102px;width:311px;height:17px;overflow:hidden"><div class="m" style="left:2px;top:2px;transform:scaleX(0.93)">ТЕСТОВЫЙ01/ Квартира/ 15.02.2011/ ЦЕНТР/ 193067, Санкт-Петербург</div></div>
<div class="m" style="left:579px;top:104px;color:#000;">Статус:</div>
<div class="ab" style="left:619px;top:101px;width:132px;height:19px;border:1px solid #A5ACB2;background:#fff"></div>
<div class="ab" style="left:621px;top:103px;width:94px;height:13px;background:#316AC5"></div>
<div class="t" style="left:622px;top:104px;color:#fff;">зарегистрировано</div>
<div class="ab" style="left:733px;top:101px;width:18px;height:18px;background:#ECE9D8;border:2px solid #C9C6B6;outline:1px solid #B0AD9D;outline-offset:-2px"></div>
<svg style="left:738px;top:108px" width="7" height="4" shape-rendering="crispEdges"><rect x="0" y="0" width="7" height="1" fill="#000"/><rect x="1" y="1" width="5" height="1" fill="#000"/><rect x="2" y="2" width="3" height="1" fill="#000"/><rect x="3" y="3" width="1" height="1" fill="#000"/></svg>
<div class="ab" style="left:755px;top:101px;width:64px;height:18px;border:1px solid #B8B5A5;background:#ECE9D8"></div>
<div class="m" style="left:759px;top:105px;color:#fff;">Установить</div>
<div class="m" style="left:758px;top:104px;color:#ACA899;">Установить</div>
<div class="ab" style="left:260px;top:121px;width:558px;height:424px;background:#fff;border:1px solid #ACA899;border-top:2px solid #ACA899"></div>
<div class="ab" style="left:818px;top:121px;width:1px;height:424px;background:#D0CCBC"></div>
<div class="ab" style="left:261px;top:123px;width:556px;height:17px;background:#ECE9D8;border-bottom:1px solid #ACA899"></div>
<div class="ab" style="left:272px;top:123px;width:1px;height:16px;background:#ACA899"></div>
<div class="ab" style="left:459px;top:123px;width:1px;height:16px;background:#ACA899"></div>
<div class="ab" style="left:261px;top:140px;width:556px;height:17px;background:#CCCCCC;border-bottom:1px solid #ACA899"></div>
<div class="ab" style="left:261px;top:140px;width:11px;height:16px;background:#ECE9D8"></div>
<div class="ab" style="left:272px;top:140px;width:1px;height:16px;background:#ACA899"></div>
<div class="ab" style="left:273px;top:140px;width:16px;height:16px;background:#fff"></div>
<div class="ab" style="left:459px;top:140px;width:1px;height:16px;background:#ACA899"></div>
<svg style="left:272px;top:139px" width="18" height="17" shape-rendering="crispEdges"><rect x="2" y="4" width="1" height="9" fill="#000"/><rect x="2" y="4" width="4" height="1" fill="#000"/><rect x="2" y="12" width="4" height="1" fill="#000"/><rect x="15" y="4" width="1" height="9" fill="#000"/><rect x="12" y="4" width="4" height="1" fill="#000"/><rect x="12" y="12" width="4" height="1" fill="#000"/><rect x="4" y="6" width="1" height="1" fill="#808080"/><rect x="6" y="6" width="1" height="1" fill="#808080"/><rect x="11" y="6" width="3" height="1" fill="#808080"/><rect x="4" y="8" width="3" height="1" fill="#808080"/><rect x="11" y="8" width="3" height="1" fill="#808080"/><rect x="4" y="10" width="3" height="1" fill="#808080"/><rect x="11" y="10" width="1" height="1" fill="#808080"/><rect x="13" y="10" width="1" height="1" fill="#808080"/><rect x="7" y="7" width="4" height="8" fill="#000080"/><rect x="8" y="2" width="2" height="4" fill="#000080"/><rect x="7" y="3" width="4" height="2" fill="#000080"/></svg>
<div class="m" style="left:291px;top:141px;color:#000;">Номер дела</div>
<div class="m" style="left:462px;top:141px;color:#000;transform:scaleX(0.929)">ТЕСТОВЫЙ01</div>
<div class="ab" style="left:261px;top:157px;width:556px;height:17px;background:#E4E2F5;border-bottom:1px solid #ACA899"></div>
<div class="ab" style="left:261px;top:157px;width:11px;height:16px;background:#ECE9D8"></div>
<div class="ab" style="left:272px;top:157px;width:1px;height:16px;background:#ACA899"></div>
<div class="ab" style="left:273px;top:157px;width:16px;height:16px;background:#fff"></div>
<div class="ab" style="left:459px;top:157px;width:1px;height:16px;background:#ACA899"></div>
<svg style="left:272px;top:156px" width="18" height="17" shape-rendering="crispEdges"><rect x="2" y="4" width="14" height="1" fill="#000"/><rect x="2" y="12" width="14" height="1" fill="#000"/><rect x="2" y="4" width="1" height="9" fill="#000"/><rect x="15" y="4" width="1" height="9" fill="#000"/><rect x="4" y="6" width="1" height="1" fill="#808080"/><rect x="4" y="8" width="2" height="1" fill="#808080"/><rect x="4" y="10" width="2" height="1" fill="#808080"/><rect x="13" y="6" width="1" height="1" fill="#808080"/><rect x="13" y="8" width="1" height="1" fill="#808080"/><rect x="13" y="10" width="1" height="1" fill="#808080"/><rect x="9" y="6" width="1" height="5" fill="#FF0000"/><rect x="8" y="8" width="3" height="1" fill="#FF0000"/><rect x="7" y="7" width="1" height="1" fill="#FF0000"/><rect x="11" y="7" width="1" height="1" fill="#FF0000"/><rect x="7" y="9" width="1" height="1" fill="#FF0000"/><rect x="11" y="9" width="1" height="1" fill="#FF0000"/></svg>
<div class="m" style="left:291px;top:158px;color:#000;">Тип объекта приватизации</div>
<div class="m" style="left:462px;top:158px;color:#000;transform:scaleX(0.929)">Квартира</div>
<div class="ab" style="left:261px;top:174px;width:556px;height:17px;background:#FFFFFF;border-bottom:1px solid #ACA899"></div>
<div class="ab" style="left:261px;top:174px;width:11px;height:16px;background:#ECE9D8"></div>
<div class="ab" style="left:272px;top:174px;width:1px;height:16px;background:#ACA899"></div>
<div class="ab" style="left:273px;top:174px;width:16px;height:16px;background:#fff"></div>
<div class="ab" style="left:459px;top:174px;width:1px;height:16px;background:#ACA899"></div>
<svg style="left:272px;top:173px" width="18" height="17" shape-rendering="crispEdges"><rect x="2" y="4" width="14" height="1" fill="#000"/><rect x="2" y="12" width="14" height="1" fill="#000"/><rect x="2" y="4" width="1" height="9" fill="#000"/><rect x="15" y="4" width="1" height="9" fill="#000"/><rect x="4" y="6" width="10" height="1" fill="#808080"/><rect x="4" y="8" width="10" height="1" fill="#808080"/><rect x="4" y="10" width="3" height="1" fill="#808080"/><rect x="8" y="10" width="3" height="1" fill="#808080"/><rect x="12" y="10" width="2" height="1" fill="#808080"/></svg>
<div class="m" style="left:291px;top:175px;color:#000;">Дата заявления</div>
<div class="m" style="left:462px;top:175px;color:#000;transform:scaleX(0.929)">15.02.2011</div>
<div class="ab" style="left:261px;top:191px;width:556px;height:17px;background:#CCCCCC;border-bottom:1px solid #ACA899"></div>
<div class="ab" style="left:261px;top:191px;width:11px;height:16px;background:#ECE9D8"></div>
<div class="ab" style="left:272px;top:191px;width:1px;height:16px;background:#ACA899"></div>
<div class="ab" style="left:273px;top:191px;width:16px;height:16px;background:#fff"></div>
<div class="ab" style="left:459px;top:191px;width:1px;height:16px;background:#ACA899"></div>
<svg style="left:272px;top:190px" width="18" height="17" shape-rendering="crispEdges"><rect x="2" y="4" width="1" height="9" fill="#000"/><rect x="2" y="4" width="8" height="1" fill="#000"/><rect x="2" y="12" width="8" height="1" fill="#000"/><rect x="14" y="4" width="2" height="1" fill="#000"/><rect x="15" y="5" width="1" height="1" fill="#000"/><rect x="14" y="12" width="2" height="1" fill="#000"/><rect x="15" y="11" width="1" height="1" fill="#000"/><rect x="4" y="6" width="2" height="5" fill="#008080"/><rect x="6" y="6" width="1" height="1" fill="#008080"/><rect x="6" y="10" width="1" height="1" fill="#008080"/><rect x="9" y="6" width="1" height="5" fill="#FF0000"/><rect x="8" y="8" width="3" height="1" fill="#FF0000"/><rect x="7" y="7" width="1" height="1" fill="#FF0000"/><rect x="11" y="7" width="1" height="1" fill="#FF0000"/><rect x="7" y="9" width="1" height="1" fill="#FF0000"/><rect x="11" y="9" width="1" height="1" fill="#FF0000"/><rect x="11" y="3" width="1" height="1" fill="#008080"/><rect x="11" y="4" width="2" height="1" fill="#008080"/><rect x="11" y="5" width="3" height="1" fill="#008080"/><rect x="11" y="6" width="4" height="1" fill="#008080"/><rect x="11" y="7" width="5" height="1" fill="#008080"/><rect x="11" y="8" width="6" height="1" fill="#008080"/><rect x="11" y="9" width="5" height="1" fill="#008080"/><rect x="11" y="10" width="4" height="1" fill="#008080"/><rect x="11" y="11" width="3" height="1" fill="#008080"/><rect x="11" y="12" width="2" height="1" fill="#008080"/><rect x="11" y="13" width="1" height="1" fill="#008080"/></svg>
<div class="m" style="left:291px;top:192px;color:#000;">Филиал ГЖО</div>
<div class="m" style="left:462px;top:192px;color:#000;transform:scaleX(0.929)">ЦЕНТР /</div>
<div class="ab" style="left:261px;top:208px;width:556px;height:17px;background:#CCCCCC;border-bottom:1px solid #ACA899"></div>
<div class="ab" style="left:261px;top:208px;width:11px;height:16px;background:#ECE9D8"></div>
<div class="ab" style="left:272px;top:208px;width:1px;height:16px;background:#ACA899"></div>
<div class="ab" style="left:273px;top:208px;width:16px;height:16px;background:#fff"></div>
<div class="ab" style="left:459px;top:208px;width:1px;height:16px;background:#ACA899"></div>
<svg style="left:272px;top:207px" width="18" height="17" shape-rendering="crispEdges"><rect x="2" y="4" width="1" height="9" fill="#000"/><rect x="2" y="4" width="8" height="1" fill="#000"/><rect x="2" y="12" width="8" height="1" fill="#000"/><rect x="14" y="4" width="2" height="1" fill="#000"/><rect x="15" y="5" width="1" height="1" fill="#000"/><rect x="14" y="12" width="2" height="1" fill="#000"/><rect x="15" y="11" width="1" height="1" fill="#000"/><rect x="4" y="6" width="2" height="5" fill="#008080"/><rect x="6" y="6" width="1" height="1" fill="#008080"/><rect x="6" y="10" width="1" height="1" fill="#008080"/><rect x="9" y="6" width="1" height="5" fill="#FF0000"/><rect x="8" y="8" width="3" height="1" fill="#FF0000"/><rect x="7" y="7" width="1" height="1" fill="#FF0000"/><rect x="11" y="7" width="1" height="1" fill="#FF0000"/><rect x="7" y="9" width="1" height="1" fill="#FF0000"/><rect x="11" y="9" width="1" height="1" fill="#FF0000"/><rect x="11" y="3" width="1" height="1" fill="#008080"/><rect x="11" y="4" width="2" height="1" fill="#008080"/><rect x="11" y="5" width="3" height="1" fill="#008080"/><rect x="11" y="6" width="4" height="1" fill="#008080"/><rect x="11" y="7" width="5" height="1" fill="#008080"/><rect x="11" y="8" width="6" height="1" fill="#008080"/><rect x="11" y="9" width="5" height="1" fill="#008080"/><rect x="11" y="10" width="4" height="1" fill="#008080"/><rect x="11" y="11" width="3" height="1" fill="#008080"/><rect x="11" y="12" width="2" height="1" fill="#008080"/><rect x="11" y="13" width="1" height="1" fill="#008080"/></svg>
<div class="m" style="left:291px;top:209px;color:#000;">Кто зарегистровал</div>
<div class="m" style="left:462px;top:209px;color:#000;transform:scaleX(0.929)">Федотова Т. И. /  / Начальник отдела</div>
<div class="ab" style="left:261px;top:225px;width:556px;height:17px;background:#CDE0B8;border-bottom:1px solid #ACA899"></div>
<div class="ab" style="left:261px;top:225px;width:11px;height:16px;background:#ECE9D8"></div>
<div class="ab" style="left:272px;top:225px;width:1px;height:16px;background:#ACA899"></div>
<div class="ab" style="left:273px;top:225px;width:16px;height:16px;background:#fff"></div>
<div class="ab" style="left:459px;top:225px;width:1px;height:16px;background:#ACA899"></div>
<svg style="left:272px;top:224px" width="18" height="17" shape-rendering="crispEdges"><rect x="2" y="4" width="1" height="9" fill="#000"/><rect x="2" y="4" width="8" height="1" fill="#000"/><rect x="2" y="12" width="8" height="1" fill="#000"/><rect x="14" y="4" width="2" height="1" fill="#000"/><rect x="15" y="5" width="1" height="1" fill="#000"/><rect x="14" y="12" width="2" height="1" fill="#000"/><rect x="15" y="11" width="1" height="1" fill="#000"/><rect x="4" y="6" width="8" height="5" fill="#008080"/><rect x="11" y="3" width="1" height="1" fill="#008080"/><rect x="11" y="4" width="2" height="1" fill="#008080"/><rect x="11" y="5" width="3" height="1" fill="#008080"/><rect x="11" y="6" width="4" height="1" fill="#008080"/><rect x="11" y="7" width="5" height="1" fill="#008080"/><rect x="11" y="8" width="6" height="1" fill="#008080"/><rect x="11" y="9" width="5" height="1" fill="#008080"/><rect x="11" y="10" width="4" height="1" fill="#008080"/><rect x="11" y="11" width="3" height="1" fill="#008080"/><rect x="11" y="12" width="2" height="1" fill="#008080"/><rect x="11" y="13" width="1" height="1" fill="#008080"/></svg>
<div class="m" style="left:291px;top:226px;color:#000;">Риэлтер</div>
<div class="ab" style="left:261px;top:242px;width:556px;height:17px;background:#CDE0B8;border-bottom:1px solid #ACA899"></div>
<div class="ab" style="left:261px;top:242px;width:11px;height:16px;background:#ECE9D8"></div>
<div class="ab" style="left:272px;top:242px;width:1px;height:16px;background:#ACA899"></div>
<div class="ab" style="left:273px;top:242px;width:16px;height:16px;background:#fff"></div>
<div class="ab" style="left:459px;top:242px;width:1px;height:16px;background:#ACA899"></div>
<svg style="left:272px;top:241px" width="18" height="17" shape-rendering="crispEdges"><rect x="2" y="4" width="1" height="9" fill="#000"/><rect x="2" y="4" width="8" height="1" fill="#000"/><rect x="2" y="12" width="8" height="1" fill="#000"/><rect x="14" y="4" width="2" height="1" fill="#000"/><rect x="15" y="5" width="1" height="1" fill="#000"/><rect x="14" y="12" width="2" height="1" fill="#000"/><rect x="15" y="11" width="1" height="1" fill="#000"/><rect x="4" y="6" width="2" height="5" fill="#008080"/><rect x="6" y="6" width="1" height="1" fill="#008080"/><rect x="6" y="10" width="1" height="1" fill="#008080"/><rect x="9" y="6" width="1" height="5" fill="#FF0000"/><rect x="8" y="8" width="3" height="1" fill="#FF0000"/><rect x="7" y="7" width="1" height="1" fill="#FF0000"/><rect x="11" y="7" width="1" height="1" fill="#FF0000"/><rect x="7" y="9" width="1" height="1" fill="#FF0000"/><rect x="11" y="9" width="1" height="1" fill="#FF0000"/><rect x="11" y="3" width="1" height="1" fill="#008080"/><rect x="11" y="4" width="2" height="1" fill="#008080"/><rect x="11" y="5" width="3" height="1" fill="#008080"/><rect x="11" y="6" width="4" height="1" fill="#008080"/><rect x="11" y="7" width="5" height="1" fill="#008080"/><rect x="11" y="8" width="6" height="1" fill="#008080"/><rect x="11" y="9" width="5" height="1" fill="#008080"/><rect x="11" y="10" width="4" height="1" fill="#008080"/><rect x="11" y="11" width="3" height="1" fill="#008080"/><rect x="11" y="12" width="2" height="1" fill="#008080"/><rect x="11" y="13" width="1" height="1" fill="#008080"/></svg>
<div class="m" style="left:291px;top:243px;color:#000;">Описание квартиры</div>
<div class="m" style="left:462px;top:243px;color:#000;transform:scaleX(0.929)">3 ком./ 69.25 общ. пл./ 58.42 ж. пл./ 193067, Санкт-Петербург, Бар...</div>
<div class="ab" style="left:261px;top:259px;width:556px;height:17px;background:#FFFFFF;border-bottom:1px solid #ACA899"></div>
<div class="ab" style="left:261px;top:259px;width:11px;height:16px;background:#ECE9D8"></div>
<div class="ab" style="left:272px;top:259px;width:1px;height:16px;background:#ACA899"></div>
<div class="ab" style="left:273px;top:259px;width:16px;height:16px;background:#fff"></div>
<div class="ab" style="left:459px;top:259px;width:1px;height:16px;background:#ACA899"></div>
<svg style="left:272px;top:258px" width="18" height="17" shape-rendering="crispEdges"><rect x="2" y="4" width="14" height="1" fill="#000"/><rect x="2" y="12" width="14" height="1" fill="#000"/><rect x="2" y="4" width="1" height="9" fill="#000"/><rect x="15" y="4" width="1" height="9" fill="#000"/><rect x="4" y="6" width="10" height="1" fill="#808080"/><rect x="4" y="8" width="10" height="1" fill="#808080"/><rect x="4" y="10" width="3" height="1" fill="#808080"/><rect x="8" y="10" width="3" height="1" fill="#808080"/><rect x="12" y="10" width="2" height="1" fill="#808080"/></svg>
<div class="m" style="left:291px;top:260px;color:#000;">Доля от квартиры в деле</div>
<div class="ab" style="left:261px;top:276px;width:556px;height:17px;background:#FEFBD0;border-bottom:1px solid #ACA899"></div>
<div class="ab" style="left:261px;top:276px;width:11px;height:16px;background:#ECE9D8"></div>
<div class="ab" style="left:272px;top:276px;width:1px;height:16px;background:#ACA899"></div>
<div class="ab" style="left:273px;top:276px;width:16px;height:16px;background:#fff"></div>
<div class="ab" style="left:459px;top:276px;width:1px;height:16px;background:#ACA899"></div>
<svg style="left:272px;top:275px" width="18" height="17" shape-rendering="crispEdges"><rect x="7" y="3" width="9" height="1" fill="#008080"/><rect x="2" y="4" width="5" height="1" fill="#000000"/><rect x="7" y="4" width="1" height="1" fill="#00FFFF"/><rect x="8" y="4" width="1" height="1" fill="#008080"/><rect x="9" y="4" width="1" height="1" fill="#00FFFF"/><rect x="10" y="4" width="1" height="1" fill="#008080"/><rect x="11" y="4" width="1" height="1" fill="#00FFFF"/><rect x="12" y="4" width="1" height="1" fill="#008080"/><rect x="13" y="4" width="1" height="1" fill="#00FFFF"/><rect x="14" y="4" width="1" height="1" fill="#008080"/><rect x="15" y="4" width="1" height="1" fill="#000080"/><rect x="16" y="4" width="1" height="1" fill="#000000"/><rect x="2" y="5" width="1" height="1" fill="#000000"/><rect x="3" y="5" width="4" height="1" fill="#FFFFFF"/><rect x="7" y="5" width="2" height="1" fill="#008080"/><rect x="9" y="5" width="5" height="1" fill="#000000"/><rect x="14" y="5" width="1" height="1" fill="#008080"/><rect x="15" y="5" width="1" height="1" fill="#000080"/><rect x="16" y="5" width="1" height="1" fill="#000000"/><rect x="2" y="6" width="1" height="1" fill="#000000"/><rect x="3" y="6" width="1" height="1" fill="#FFFFFF"/><rect x="4" y="6" width="1" height="1" fill="#808080"/><rect x="5" y="6" width="2" height="1" fill="#FFFFFF"/><rect x="7" y="6" width="1" height="1" fill="#00FFFF"/><rect x="8" y="6" width="1" height="1" fill="#008080"/><rect x="9" y="6" width="1" height="1" fill="#000000"/><rect x="10" y="6" width="3" height="1" fill="#FFFFFF"/><rect x="13" y="6" width="1" height="1" fill="#000000"/><rect x="14" y="6" width="1" height="1" fill="#008080"/><rect x="15" y="6" width="1" height="1" fill="#000080"/><rect x="16" y="6" width="1" height="1" fill="#000000"/><rect x="2" y="7" width="1" height="1" fill="#000000"/><rect x="3" y="7" width="4" height="1" fill="#FFFFFF"/><rect x="7" y="7" width="2" height="1" fill="#008080"/><rect x="9" y="7" width="5" height="1" fill="#000000"/><rect x="14" y="7" width="1" height="1" fill="#008080"/><rect x="15" y="7" width="1" height="1" fill="#000080"/><rect x="16" y="7" width="1" height="1" fill="#000000"/><rect x="2" y="8" width="1" height="1" fill="#000000"/><rect x="3" y="8" width="1" height="1" fill="#FFFFFF"/><rect x="4" y="8" width="2" height="1" fill="#808080"/><rect x="6" y="8" width="1" height="1" fill="#FFFFFF"/><rect x="7" y="8" width="1" height="1" fill="#00FFFF"/><rect x="8" y="8" width="7" height="1" fill="#008080"/><rect x="15" y="8" width="1" height="1" fill="#000080"/><rect x="16" y="8" width="1" height="1" fill="#000000"/><rect x="2" y="9" width="1" height="1" fill="#000000"/><rect x="3" y="9" width="4" height="1" fill="#FFFFFF"/><rect x="7" y="9" width="2" height="1" fill="#008080"/><rect x="9" y="9" width="1" height="1" fill="#FFFFFF"/><rect x="10" y="9" width="1" height="1" fill="#000000"/><rect x="11" y="9" width="1" height="1" fill="#FFFFFF"/><rect x="12" y="9" width="1" height="1" fill="#000000"/><rect x="13" y="9" width="1" height="1" fill="#FFFFFF"/><rect x="14" y="9" width="1" height="1" fill="#008080"/><rect x="15" y="9" width="1" height="1" fill="#000080"/><rect x="16" y="9" width="1" height="1" fill="#000000"/><rect x="2" y="10" width="1" height="1" fill="#000000"/><rect x="3" y="10" width="1" height="1" fill="#FFFFFF"/><rect x="4" y="10" width="2" height="1" fill="#808080"/><rect x="6" y="10" width="1" height="1" fill="#FFFFFF"/><rect x="7" y="10" width="1" height="1" fill="#00FFFF"/><rect x="8" y="10" width="7" height="1" fill="#008080"/><rect x="15" y="10" width="1" height="1" fill="#000080"/><rect x="16" y="10" width="1" height="1" fill="#000000"/><rect x="2" y="11" width="1" height="1" fill="#000000"/><rect x="3" y="11" width="4" height="1" fill="#FFFFFF"/><rect x="7" y="11" width="2" height="1" fill="#008080"/><rect x="9" y="11" width="1" height="1" fill="#FFFFFF"/><rect x="10" y="11" width="1" height="1" fill="#000000"/><rect x="11" y="11" width="1" height="1" fill="#FFFFFF"/><rect x="12" y="11" width="1" height="1" fill="#000000"/><rect x="13" y="11" width="1" height="1" fill="#FFFFFF"/><rect x="14" y="11" width="1" height="1" fill="#008080"/><rect x="15" y="11" width="1" height="1" fill="#000080"/><rect x="16" y="11" width="1" height="1" fill="#000000"/><rect x="2" y="12" width="5" height="1" fill="#000000"/><rect x="7" y="12" width="1" height="1" fill="#00FFFF"/><rect x="8" y="12" width="7" height="1" fill="#008080"/><rect x="15" y="12" width="1" height="1" fill="#000080"/><rect x="16" y="12" width="1" height="1" fill="#000000"/><rect x="7" y="13" width="1" height="1" fill="#008080"/><rect x="8" y="13" width="8" height="1" fill="#000080"/><rect x="16" y="13" width="1" height="1" fill="#000000"/><rect x="7" y="14" width="10" height="1" fill="#000000"/></svg>
<div class="m" style="left:291px;top:277px;color:#000;">Общее кол-во долей</div>
<div class="ab" style="left:261px;top:293px;width:556px;height:17px;background:#CDE0B8;border-bottom:1px solid #ACA899"></div>
<div class="ab" style="left:261px;top:293px;width:11px;height:16px;background:#ECE9D8"></div>
<div class="ab" style="left:272px;top:293px;width:1px;height:16px;background:#ACA899"></div>
<div class="ab" style="left:273px;top:293px;width:16px;height:16px;background:#fff"></div>
<div class="ab" style="left:459px;top:293px;width:1px;height:16px;background:#ACA899"></div>
<svg style="left:272px;top:292px" width="18" height="17" shape-rendering="crispEdges"><rect x="2" y="4" width="1" height="9" fill="#000"/><rect x="2" y="4" width="8" height="1" fill="#000"/><rect x="2" y="12" width="8" height="1" fill="#000"/><rect x="14" y="4" width="2" height="1" fill="#000"/><rect x="15" y="5" width="1" height="1" fill="#000"/><rect x="14" y="12" width="2" height="1" fill="#000"/><rect x="15" y="11" width="1" height="1" fill="#000"/><rect x="4" y="6" width="8" height="5" fill="#008080"/><rect x="11" y="3" width="1" height="1" fill="#008080"/><rect x="11" y="4" width="2" height="1" fill="#008080"/><rect x="11" y="5" width="3" height="1" fill="#008080"/><rect x="11" y="6" width="4" height="1" fill="#008080"/><rect x="11" y="7" width="5" height="1" fill="#008080"/><rect x="11" y="8" width="6" height="1" fill="#008080"/><rect x="11" y="9" width="5" height="1" fill="#008080"/><rect x="11" y="10" width="4" height="1" fill="#008080"/><rect x="11" y="11" width="3" height="1" fill="#008080"/><rect x="11" y="12" width="2" height="1" fill="#008080"/><rect x="11" y="13" width="1" height="1" fill="#008080"/></svg>
<div class="m" style="left:291px;top:294px;color:#000;transform:scaleX(0.93)">Перечень приватизируемых ко...</div>
<div class="m" style="left:462px;top:294px;color:#000;transform:scaleX(0.929)">21.21 м. кв./ ; 21.21 м. кв./ ; 16 м. кв./</div>
<div class="ab" style="left:261px;top:310px;width:556px;height:17px;background:#FFFFFF;border-bottom:1px solid #ACA899"></div>
<div class="ab" style="left:261px;top:310px;width:11px;height:16px;background:#ECE9D8"></div>
<div class="ab" style="left:272px;top:310px;width:1px;height:16px;background:#ACA899"></div>
<div class="ab" style="left:273px;top:310px;width:16px;height:16px;background:#fff"></div>
<div class="ab" style="left:459px;top:310px;width:1px;height:16px;background:#ACA899"></div>
<svg style="left:272px;top:309px" width="18" height="17" shape-rendering="crispEdges"><rect x="2" y="4" width="14" height="1" fill="#000"/><rect x="2" y="12" width="14" height="1" fill="#000"/><rect x="2" y="4" width="1" height="9" fill="#000"/><rect x="15" y="4" width="1" height="9" fill="#000"/><rect x="4" y="6" width="10" height="1" fill="#808080"/><rect x="4" y="8" width="10" height="1" fill="#808080"/><rect x="4" y="10" width="3" height="1" fill="#808080"/><rect x="8" y="10" width="3" height="1" fill="#808080"/><rect x="12" y="10" width="2" height="1" fill="#808080"/></svg>
<div class="m" style="left:291px;top:311px;color:#000;transform:scaleX(0.93)">Кол-во приватизируемых комн...</div>
<div class="ab" style="left:261px;top:327px;width:556px;height:17px;background:#E4E2F5;border-bottom:1px solid #ACA899"></div>
<div class="ab" style="left:261px;top:327px;width:11px;height:16px;background:#ECE9D8"></div>
<div class="ab" style="left:272px;top:327px;width:1px;height:16px;background:#ACA899"></div>
<div class="ab" style="left:273px;top:327px;width:16px;height:16px;background:#fff"></div>
<div class="ab" style="left:459px;top:327px;width:1px;height:16px;background:#ACA899"></div>
<svg style="left:272px;top:326px" width="18" height="17" shape-rendering="crispEdges"><rect x="2" y="4" width="14" height="1" fill="#000"/><rect x="2" y="12" width="14" height="1" fill="#000"/><rect x="2" y="4" width="1" height="9" fill="#000"/><rect x="15" y="4" width="1" height="9" fill="#000"/><rect x="4" y="6" width="1" height="1" fill="#808080"/><rect x="4" y="8" width="2" height="1" fill="#808080"/><rect x="4" y="10" width="2" height="1" fill="#808080"/><rect x="13" y="6" width="1" height="1" fill="#808080"/><rect x="13" y="8" width="1" height="1" fill="#808080"/><rect x="13" y="10" width="1" height="1" fill="#808080"/><rect x="9" y="6" width="1" height="5" fill="#FF0000"/><rect x="8" y="8" width="3" height="1" fill="#FF0000"/><rect x="7" y="7" width="1" height="1" fill="#FF0000"/><rect x="11" y="7" width="1" height="1" fill="#FF0000"/><rect x="7" y="9" width="1" height="1" fill="#FF0000"/><rect x="11" y="9" width="1" height="1" fill="#FF0000"/></svg>
<div class="m" style="left:291px;top:328px;color:#000;">Тип собственности</div>
<div class="m" style="left:462px;top:328px;color:#000;transform:scaleX(0.929)">частная</div>
<div class="ab" style="left:261px;top:344px;width:556px;height:17px;background:#CDE0B8;border-bottom:1px solid #ACA899"></div>
<div class="ab" style="left:261px;top:344px;width:11px;height:16px;background:#ECE9D8"></div>
<div class="ab" style="left:272px;top:344px;width:1px;height:16px;background:#ACA899"></div>
<div class="ab" style="left:273px;top:344px;width:16px;height:16px;background:#fff"></div>
<div class="ab" style="left:459px;top:344px;width:1px;height:16px;background:#ACA899"></div>
<svg style="left:272px;top:343px" width="18" height="17" shape-rendering="crispEdges"><rect x="2" y="4" width="1" height="9" fill="#000"/><rect x="2" y="4" width="8" height="1" fill="#000"/><rect x="2" y="12" width="8" height="1" fill="#000"/><rect x="14" y="4" width="2" height="1" fill="#000"/><rect x="15" y="5" width="1" height="1" fill="#000"/><rect x="14" y="12" width="2" height="1" fill="#000"/><rect x="15" y="11" width="1" height="1" fill="#000"/><rect x="4" y="6" width="2" height="5" fill="#008080"/><rect x="6" y="6" width="1" height="1" fill="#008080"/><rect x="6" y="10" width="1" height="1" fill="#008080"/><rect x="9" y="6" width="1" height="5" fill="#FF0000"/><rect x="8" y="8" width="3" height="1" fill="#FF0000"/><rect x="7" y="7" width="1" height="1" fill="#FF0000"/><rect x="11" y="7" width="1" height="1" fill="#FF0000"/><rect x="7" y="9" width="1" height="1" fill="#FF0000"/><rect x="11" y="9" width="1" height="1" fill="#FF0000"/><rect x="11" y="3" width="1" height="1" fill="#008080"/><rect x="11" y="4" width="2" height="1" fill="#008080"/><rect x="11" y="5" width="3" height="1" fill="#008080"/><rect x="11" y="6" width="4" height="1" fill="#008080"/><rect x="11" y="7" width="5" height="1" fill="#008080"/><rect x="11" y="8" width="6" height="1" fill="#008080"/><rect x="11" y="9" width="5" height="1" fill="#008080"/><rect x="11" y="10" width="4" height="1" fill="#008080"/><rect x="11" y="11" width="3" height="1" fill="#008080"/><rect x="11" y="12" width="2" height="1" fill="#008080"/><rect x="11" y="13" width="1" height="1" fill="#008080"/></svg>
<div class="m" style="left:291px;top:345px;color:#000;">Собственники</div>
<div class="m" style="left:462px;top:345px;color:#000;transform:scaleX(0.929)">Иванов Сидр Титыч/ 15.02.1962</div>
<div class="ab" style="left:261px;top:361px;width:556px;height:17px;background:#FFFFFF;border-bottom:1px solid #ACA899"></div>
<div class="ab" style="left:261px;top:361px;width:11px;height:16px;background:#ECE9D8"></div>
<div class="ab" style="left:272px;top:361px;width:1px;height:16px;background:#ACA899"></div>
<div class="ab" style="left:273px;top:361px;width:16px;height:16px;background:#fff"></div>
<div class="ab" style="left:459px;top:361px;width:1px;height:16px;background:#ACA899"></div>
<svg style="left:272px;top:360px" width="18" height="17" shape-rendering="crispEdges"><rect x="2" y="4" width="14" height="1" fill="#000"/><rect x="2" y="12" width="14" height="1" fill="#000"/><rect x="2" y="4" width="1" height="9" fill="#000"/><rect x="15" y="4" width="1" height="9" fill="#000"/><rect x="4" y="6" width="10" height="1" fill="#808080"/><rect x="4" y="8" width="10" height="1" fill="#808080"/><rect x="4" y="10" width="3" height="1" fill="#808080"/><rect x="8" y="10" width="3" height="1" fill="#808080"/><rect x="12" y="10" width="2" height="1" fill="#808080"/></svg>
<div class="m" style="left:291px;top:362px;color:#000;">Кол-во человек</div>
<div class="ab" style="left:261px;top:378px;width:556px;height:17px;background:#CDE0B8;border-bottom:1px solid #ACA899"></div>
<div class="ab" style="left:261px;top:378px;width:11px;height:16px;background:#ECE9D8"></div>
<div class="ab" style="left:272px;top:378px;width:1px;height:16px;background:#ACA899"></div>
<div class="ab" style="left:273px;top:378px;width:16px;height:16px;background:#fff"></div>
<div class="ab" style="left:459px;top:378px;width:1px;height:16px;background:#ACA899"></div>
<svg style="left:272px;top:377px" width="18" height="17" shape-rendering="crispEdges"><rect x="2" y="4" width="1" height="9" fill="#000"/><rect x="2" y="4" width="8" height="1" fill="#000"/><rect x="2" y="12" width="8" height="1" fill="#000"/><rect x="14" y="4" width="2" height="1" fill="#000"/><rect x="15" y="5" width="1" height="1" fill="#000"/><rect x="14" y="12" width="2" height="1" fill="#000"/><rect x="15" y="11" width="1" height="1" fill="#000"/><rect x="4" y="6" width="8" height="5" fill="#008080"/><rect x="11" y="3" width="1" height="1" fill="#008080"/><rect x="11" y="4" width="2" height="1" fill="#008080"/><rect x="11" y="5" width="3" height="1" fill="#008080"/><rect x="11" y="6" width="4" height="1" fill="#008080"/><rect x="11" y="7" width="5" height="1" fill="#008080"/><rect x="11" y="8" width="6" height="1" fill="#008080"/><rect x="11" y="9" width="5" height="1" fill="#008080"/><rect x="11" y="10" width="4" height="1" fill="#008080"/><rect x="11" y="11" width="3" height="1" fill="#008080"/><rect x="11" y="12" width="2" height="1" fill="#008080"/><rect x="11" y="13" width="1" height="1" fill="#008080"/></svg>
<div class="m" style="left:291px;top:379px;color:#000;">События дела</div>
<div class="ab" style="left:261px;top:395px;width:556px;height:17px;background:#CDE0B8;border-bottom:1px solid #ACA899"></div>
<div class="ab" style="left:261px;top:395px;width:11px;height:16px;background:#ECE9D8"></div>
<div class="ab" style="left:272px;top:395px;width:1px;height:16px;background:#ACA899"></div>
<div class="ab" style="left:273px;top:395px;width:16px;height:16px;background:#fff"></div>
<div class="ab" style="left:459px;top:395px;width:1px;height:16px;background:#ACA899"></div>
<svg style="left:272px;top:394px" width="18" height="17" shape-rendering="crispEdges"><rect x="2" y="4" width="1" height="9" fill="#000"/><rect x="2" y="4" width="8" height="1" fill="#000"/><rect x="2" y="12" width="8" height="1" fill="#000"/><rect x="14" y="4" width="2" height="1" fill="#000"/><rect x="15" y="5" width="1" height="1" fill="#000"/><rect x="14" y="12" width="2" height="1" fill="#000"/><rect x="15" y="11" width="1" height="1" fill="#000"/><rect x="4" y="6" width="8" height="5" fill="#008080"/><rect x="11" y="3" width="1" height="1" fill="#008080"/><rect x="11" y="4" width="2" height="1" fill="#008080"/><rect x="11" y="5" width="3" height="1" fill="#008080"/><rect x="11" y="6" width="4" height="1" fill="#008080"/><rect x="11" y="7" width="5" height="1" fill="#008080"/><rect x="11" y="8" width="6" height="1" fill="#008080"/><rect x="11" y="9" width="5" height="1" fill="#008080"/><rect x="11" y="10" width="4" height="1" fill="#008080"/><rect x="11" y="11" width="3" height="1" fill="#008080"/><rect x="11" y="12" width="2" height="1" fill="#008080"/><rect x="11" y="13" width="1" height="1" fill="#008080"/></svg>
<div class="m" style="left:291px;top:396px;color:#000;">Документы дела</div>
<div class="m" style="left:462px;top:396px;color:#000;transform:scaleX(0.929)">Форма 7 :   от 15.02.2011, ; Форма 9 :   от 15.02.2011, ; Заявление ...</div>
<div class="ab" style="left:261px;top:412px;width:556px;height:17px;background:#CDE0B8;border-bottom:1px solid #ACA899"></div>
<div class="ab" style="left:261px;top:412px;width:11px;height:16px;background:#ECE9D8"></div>
<div class="ab" style="left:272px;top:412px;width:1px;height:16px;background:#ACA899"></div>
<div class="ab" style="left:273px;top:412px;width:16px;height:16px;background:#fff"></div>
<div class="ab" style="left:459px;top:412px;width:1px;height:16px;background:#ACA899"></div>
<svg style="left:272px;top:411px" width="18" height="17" shape-rendering="crispEdges"><rect x="2" y="4" width="1" height="9" fill="#000"/><rect x="2" y="4" width="8" height="1" fill="#000"/><rect x="2" y="12" width="8" height="1" fill="#000"/><rect x="14" y="4" width="2" height="1" fill="#000"/><rect x="15" y="5" width="1" height="1" fill="#000"/><rect x="14" y="12" width="2" height="1" fill="#000"/><rect x="15" y="11" width="1" height="1" fill="#000"/><rect x="4" y="6" width="8" height="5" fill="#008080"/><rect x="11" y="3" width="1" height="1" fill="#008080"/><rect x="11" y="4" width="2" height="1" fill="#008080"/><rect x="11" y="5" width="3" height="1" fill="#008080"/><rect x="11" y="6" width="4" height="1" fill="#008080"/><rect x="11" y="7" width="5" height="1" fill="#008080"/><rect x="11" y="8" width="6" height="1" fill="#008080"/><rect x="11" y="9" width="5" height="1" fill="#008080"/><rect x="11" y="10" width="4" height="1" fill="#008080"/><rect x="11" y="11" width="3" height="1" fill="#008080"/><rect x="11" y="12" width="2" height="1" fill="#008080"/><rect x="11" y="13" width="1" height="1" fill="#008080"/></svg>
<div class="m" style="left:291px;top:413px;color:#000;transform:scaleX(0.93)">Описание по распределению(с...</div>
<div class="ab" style="left:261px;top:429px;width:556px;height:17px;background:#FEFBD0;border-bottom:1px solid #ACA899"></div>
<div class="ab" style="left:261px;top:429px;width:11px;height:16px;background:#ECE9D8"></div>
<div class="ab" style="left:272px;top:429px;width:1px;height:16px;background:#ACA899"></div>
<div class="ab" style="left:273px;top:429px;width:16px;height:16px;background:#fff"></div>
<div class="ab" style="left:459px;top:429px;width:1px;height:16px;background:#ACA899"></div>
<svg style="left:272px;top:428px" width="18" height="17" shape-rendering="crispEdges"><rect x="7" y="3" width="9" height="1" fill="#008080"/><rect x="2" y="4" width="5" height="1" fill="#000000"/><rect x="7" y="4" width="1" height="1" fill="#00FFFF"/><rect x="8" y="4" width="1" height="1" fill="#008080"/><rect x="9" y="4" width="1" height="1" fill="#00FFFF"/><rect x="10" y="4" width="1" height="1" fill="#008080"/><rect x="11" y="4" width="1" height="1" fill="#00FFFF"/><rect x="12" y="4" width="1" height="1" fill="#008080"/><rect x="13" y="4" width="1" height="1" fill="#00FFFF"/><rect x="14" y="4" width="1" height="1" fill="#008080"/><rect x="15" y="4" width="1" height="1" fill="#000080"/><rect x="16" y="4" width="1" height="1" fill="#000000"/><rect x="2" y="5" width="1" height="1" fill="#000000"/><rect x="3" y="5" width="4" height="1" fill="#FFFFFF"/><rect x="7" y="5" width="2" height="1" fill="#008080"/><rect x="9" y="5" width="5" height="1" fill="#000000"/><rect x="14" y="5" width="1" height="1" fill="#008080"/><rect x="15" y="5" width="1" height="1" fill="#000080"/><rect x="16" y="5" width="1" height="1" fill="#000000"/><rect x="2" y="6" width="1" height="1" fill="#000000"/><rect x="3" y="6" width="1" height="1" fill="#FFFFFF"/><rect x="4" y="6" width="1" height="1" fill="#808080"/><rect x="5" y="6" width="2" height="1" fill="#FFFFFF"/><rect x="7" y="6" width="1" height="1" fill="#00FFFF"/><rect x="8" y="6" width="1" height="1" fill="#008080"/><rect x="9" y="6" width="1" height="1" fill="#000000"/><rect x="10" y="6" width="3" height="1" fill="#FFFFFF"/><rect x="13" y="6" width="1" height="1" fill="#000000"/><rect x="14" y="6" width="1" height="1" fill="#008080"/><rect x="15" y="6" width="1" height="1" fill="#000080"/><rect x="16" y="6" width="1" height="1" fill="#000000"/><rect x="2" y="7" width="1" height="1" fill="#000000"/><rect x="3" y="7" width="4" height="1" fill="#FFFFFF"/><rect x="7" y="7" width="2" height="1" fill="#008080"/><rect x="9" y="7" width="5" height="1" fill="#000000"/><rect x="14" y="7" width="1" height="1" fill="#008080"/><rect x="15" y="7" width="1" height="1" fill="#000080"/><rect x="16" y="7" width="1" height="1" fill="#000000"/><rect x="2" y="8" width="1" height="1" fill="#000000"/><rect x="3" y="8" width="1" height="1" fill="#FFFFFF"/><rect x="4" y="8" width="2" height="1" fill="#808080"/><rect x="6" y="8" width="1" height="1" fill="#FFFFFF"/><rect x="7" y="8" width="1" height="1" fill="#00FFFF"/><rect x="8" y="8" width="7" height="1" fill="#008080"/><rect x="15" y="8" width="1" height="1" fill="#000080"/><rect x="16" y="8" width="1" height="1" fill="#000000"/><rect x="2" y="9" width="1" height="1" fill="#000000"/><rect x="3" y="9" width="4" height="1" fill="#FFFFFF"/><rect x="7" y="9" width="2" height="1" fill="#008080"/><rect x="9" y="9" width="1" height="1" fill="#FFFFFF"/><rect x="10" y="9" width="1" height="1" fill="#000000"/><rect x="11" y="9" width="1" height="1" fill="#FFFFFF"/><rect x="12" y="9" width="1" height="1" fill="#000000"/><rect x="13" y="9" width="1" height="1" fill="#FFFFFF"/><rect x="14" y="9" width="1" height="1" fill="#008080"/><rect x="15" y="9" width="1" height="1" fill="#000080"/><rect x="16" y="9" width="1" height="1" fill="#000000"/><rect x="2" y="10" width="1" height="1" fill="#000000"/><rect x="3" y="10" width="1" height="1" fill="#FFFFFF"/><rect x="4" y="10" width="2" height="1" fill="#808080"/><rect x="6" y="10" width="1" height="1" fill="#FFFFFF"/><rect x="7" y="10" width="1" height="1" fill="#00FFFF"/><rect x="8" y="10" width="7" height="1" fill="#008080"/><rect x="15" y="10" width="1" height="1" fill="#000080"/><rect x="16" y="10" width="1" height="1" fill="#000000"/><rect x="2" y="11" width="1" height="1" fill="#000000"/><rect x="3" y="11" width="4" height="1" fill="#FFFFFF"/><rect x="7" y="11" width="2" height="1" fill="#008080"/><rect x="9" y="11" width="1" height="1" fill="#FFFFFF"/><rect x="10" y="11" width="1" height="1" fill="#000000"/><rect x="11" y="11" width="1" height="1" fill="#FFFFFF"/><rect x="12" y="11" width="1" height="1" fill="#000000"/><rect x="13" y="11" width="1" height="1" fill="#FFFFFF"/><rect x="14" y="11" width="1" height="1" fill="#008080"/><rect x="15" y="11" width="1" height="1" fill="#000080"/><rect x="16" y="11" width="1" height="1" fill="#000000"/><rect x="2" y="12" width="5" height="1" fill="#000000"/><rect x="7" y="12" width="1" height="1" fill="#00FFFF"/><rect x="8" y="12" width="7" height="1" fill="#008080"/><rect x="15" y="12" width="1" height="1" fill="#000080"/><rect x="16" y="12" width="1" height="1" fill="#000000"/><rect x="7" y="13" width="1" height="1" fill="#008080"/><rect x="8" y="13" width="8" height="1" fill="#000080"/><rect x="16" y="13" width="1" height="1" fill="#000000"/><rect x="7" y="14" width="10" height="1" fill="#000000"/></svg>
<div class="m" style="left:291px;top:430px;color:#000;">Филиал</div>
<div class="m" style="left:462px;top:430px;color:#000;transform:scaleX(0.929)">ЦЕНТР</div>
<div class="ab" style="left:261px;top:446px;width:556px;height:17px;background:#FEFBD0;border-bottom:1px solid #ACA899"></div>
<div class="ab" style="left:261px;top:446px;width:11px;height:16px;background:#ECE9D8"></div>
<div class="ab" style="left:272px;top:446px;width:1px;height:16px;background:#ACA899"></div>
<div class="ab" style="left:273px;top:446px;width:16px;height:16px;background:#fff"></div>
<div class="ab" style="left:459px;top:446px;width:1px;height:16px;background:#ACA899"></div>
<svg style="left:272px;top:445px" width="18" height="17" shape-rendering="crispEdges"><rect x="7" y="3" width="9" height="1" fill="#008080"/><rect x="2" y="4" width="5" height="1" fill="#000000"/><rect x="7" y="4" width="1" height="1" fill="#00FFFF"/><rect x="8" y="4" width="1" height="1" fill="#008080"/><rect x="9" y="4" width="1" height="1" fill="#00FFFF"/><rect x="10" y="4" width="1" height="1" fill="#008080"/><rect x="11" y="4" width="1" height="1" fill="#00FFFF"/><rect x="12" y="4" width="1" height="1" fill="#008080"/><rect x="13" y="4" width="1" height="1" fill="#00FFFF"/><rect x="14" y="4" width="1" height="1" fill="#008080"/><rect x="15" y="4" width="1" height="1" fill="#000080"/><rect x="16" y="4" width="1" height="1" fill="#000000"/><rect x="2" y="5" width="1" height="1" fill="#000000"/><rect x="3" y="5" width="4" height="1" fill="#FFFFFF"/><rect x="7" y="5" width="2" height="1" fill="#008080"/><rect x="9" y="5" width="5" height="1" fill="#000000"/><rect x="14" y="5" width="1" height="1" fill="#008080"/><rect x="15" y="5" width="1" height="1" fill="#000080"/><rect x="16" y="5" width="1" height="1" fill="#000000"/><rect x="2" y="6" width="1" height="1" fill="#000000"/><rect x="3" y="6" width="1" height="1" fill="#FFFFFF"/><rect x="4" y="6" width="1" height="1" fill="#808080"/><rect x="5" y="6" width="2" height="1" fill="#FFFFFF"/><rect x="7" y="6" width="1" height="1" fill="#00FFFF"/><rect x="8" y="6" width="1" height="1" fill="#008080"/><rect x="9" y="6" width="1" height="1" fill="#000000"/><rect x="10" y="6" width="3" height="1" fill="#FFFFFF"/><rect x="13" y="6" width="1" height="1" fill="#000000"/><rect x="14" y="6" width="1" height="1" fill="#008080"/><rect x="15" y="6" width="1" height="1" fill="#000080"/><rect x="16" y="6" width="1" height="1" fill="#000000"/><rect x="2" y="7" width="1" height="1" fill="#000000"/><rect x="3" y="7" width="4" height="1" fill="#FFFFFF"/><rect x="7" y="7" width="2" height="1" fill="#008080"/><rect x="9" y="7" width="5" height="1" fill="#000000"/><rect x="14" y="7" width="1" height="1" fill="#008080"/><rect x="15" y="7" width="1" height="1" fill="#000080"/><rect x="16" y="7" width="1" height="1" fill="#000000"/><rect x="2" y="8" width="1" height="1" fill="#000000"/><rect x="3" y="8" width="1" height="1" fill="#FFFFFF"/><rect x="4" y="8" width="2" height="1" fill="#808080"/><rect x="6" y="8" width="1" height="1" fill="#FFFFFF"/><rect x="7" y="8" width="1" height="1" fill="#00FFFF"/><rect x="8" y="8" width="7" height="1" fill="#008080"/><rect x="15" y="8" width="1" height="1" fill="#000080"/><rect x="16" y="8" width="1" height="1" fill="#000000"/><rect x="2" y="9" width="1" height="1" fill="#000000"/><rect x="3" y="9" width="4" height="1" fill="#FFFFFF"/><rect x="7" y="9" width="2" height="1" fill="#008080"/><rect x="9" y="9" width="1" height="1" fill="#FFFFFF"/><rect x="10" y="9" width="1" height="1" fill="#000000"/><rect x="11" y="9" width="1" height="1" fill="#FFFFFF"/><rect x="12" y="9" width="1" height="1" fill="#000000"/><rect x="13" y="9" width="1" height="1" fill="#FFFFFF"/><rect x="14" y="9" width="1" height="1" fill="#008080"/><rect x="15" y="9" width="1" height="1" fill="#000080"/><rect x="16" y="9" width="1" height="1" fill="#000000"/><rect x="2" y="10" width="1" height="1" fill="#000000"/><rect x="3" y="10" width="1" height="1" fill="#FFFFFF"/><rect x="4" y="10" width="2" height="1" fill="#808080"/><rect x="6" y="10" width="1" height="1" fill="#FFFFFF"/><rect x="7" y="10" width="1" height="1" fill="#00FFFF"/><rect x="8" y="10" width="7" height="1" fill="#008080"/><rect x="15" y="10" width="1" height="1" fill="#000080"/><rect x="16" y="10" width="1" height="1" fill="#000000"/><rect x="2" y="11" width="1" height="1" fill="#000000"/><rect x="3" y="11" width="4" height="1" fill="#FFFFFF"/><rect x="7" y="11" width="2" height="1" fill="#008080"/><rect x="9" y="11" width="1" height="1" fill="#FFFFFF"/><rect x="10" y="11" width="1" height="1" fill="#000000"/><rect x="11" y="11" width="1" height="1" fill="#FFFFFF"/><rect x="12" y="11" width="1" height="1" fill="#000000"/><rect x="13" y="11" width="1" height="1" fill="#FFFFFF"/><rect x="14" y="11" width="1" height="1" fill="#008080"/><rect x="15" y="11" width="1" height="1" fill="#000080"/><rect x="16" y="11" width="1" height="1" fill="#000000"/><rect x="2" y="12" width="5" height="1" fill="#000000"/><rect x="7" y="12" width="1" height="1" fill="#00FFFF"/><rect x="8" y="12" width="7" height="1" fill="#008080"/><rect x="15" y="12" width="1" height="1" fill="#000080"/><rect x="16" y="12" width="1" height="1" fill="#000000"/><rect x="7" y="13" width="1" height="1" fill="#008080"/><rect x="8" y="13" width="8" height="1" fill="#000080"/><rect x="16" y="13" width="1" height="1" fill="#000000"/><rect x="7" y="14" width="10" height="1" fill="#000000"/></svg>
<div class="m" style="left:291px;top:447px;color:#000;">Адрес</div>
<div class="m" style="left:462px;top:447px;color:#000;transform:scaleX(0.929)">193067, Санкт-Петербург, Барклаевская ул. д. 23, корп. 1, лит. А, к...</div>
<svg style="left:264px;top:144px" width="6" height="8" shape-rendering="crispEdges"><rect x="0" y="0" width="1" height="8" fill="#000"/><rect x="1" y="1" width="1" height="6" fill="#000"/><rect x="2" y="2" width="1" height="4" fill="#000"/><rect x="3" y="3" width="1" height="2" fill="#000"/></svg>
<div class="ab" style="left:619px;top:120px;width:179px;height:54px;border:1px solid #000;background:#fff"></div>
<div class="t" style="left:622px;top:122px;color:#000;">зарегистрировано</div>
<div class="t" style="left:622px;top:135px;color:#000;">отказ</div>
<div class="ab" style="left:620px;top:147px;width:177px;height:13px;background:#316AC5;border:1px solid #000"></div>
<div class="ab" style="left:620px;top:147px;width:177px;height:13px;border:1px dotted #F0B040"></div>
<div class="t" style="left:622px;top:148px;color:#fff;">проверено в юридическом отделе</div>
<div class="t" style="left:622px;top:161px;color:#000;">аннулирован</div>
<div class="ab" style="left:5px;top:549px;width:395px;height:18px;border:1px solid #ACA899"></div>
<div class="ab" style="left:404px;top:549px;width:150px;height:18px;border:1px solid #ACA899"></div>
<div class="m" style="left:408px;top:552px;color:#000;transform:scaleX(0.95)">Обработка</div>
<div class="ab" style="left:557px;top:549px;width:1px;height:18px;background:#ACA899"></div>
<svg style="left:560px;top:550px" width="13" height="15" shape-rendering="crispEdges"><rect x="1" y="0" width="9" height="1" fill="#6A8AD0"/><rect x="10" y="0" width="2" height="1" fill="#E020E0"/><rect x="1" y="1" width="1" height="1" fill="#6A8AD0"/><rect x="2" y="1" width="8" height="1" fill="#FFFFFF"/><rect x="10" y="1" width="1" height="1" fill="#E020E0"/><rect x="11" y="1" width="1" height="1" fill="#B8E0F0"/><rect x="12" y="1" width="1" height="1" fill="#E020E0"/><rect x="1" y="2" width="1" height="1" fill="#6A8AD0"/><rect x="2" y="2" width="1" height="1" fill="#FFFFFF"/><rect x="3" y="2" width="4" height="1" fill="#D8E8F8"/><rect x="7" y="2" width="3" height="1" fill="#FFFFFF"/><rect x="10" y="2" width="2" height="1" fill="#B8E0F0"/><rect x="12" y="2" width="1" height="1" fill="#E020E0"/><rect x="2" y="3" width="4" height="1" fill="#3A3030"/><rect x="6" y="3" width="6" height="1" fill="#FFFFFF"/><rect x="12" y="3" width="1" height="1" fill="#6A8AD0"/><rect x="1" y="4" width="1" height="1" fill="#3A3030"/><rect x="2" y="4" width="1" height="1" fill="#D8E8F8"/><rect x="3" y="4" width="2" height="1" fill="#FFFFFF"/><rect x="5" y="4" width="1" height="1" fill="#D8E8F8"/><rect x="6" y="4" width="1" height="1" fill="#3A3030"/><rect x="7" y="4" width="1" height="1" fill="#FFFFFF"/><rect x="8" y="4" width="3" height="1" fill="#6A8AD0"/><rect x="11" y="4" width="1" height="1" fill="#FFFFFF"/><rect x="12" y="4" width="1" height="1" fill="#6A8AD0"/><rect x="0" y="5" width="1" height="1" fill="#3A3030"/><rect x="1" y="5" width="1" height="1" fill="#D8E8F8"/><rect x="2" y="5" width="1" height="1" fill="#FFFFFF"/><rect x="3" y="5" width="3" height="1" fill="#B8E0F0"/><rect x="6" y="5" width="1" height="1" fill="#D8E8F8"/><rect x="7" y="5" width="1" height="1" fill="#3A3030"/><rect x="8" y="5" width="4" height="1" fill="#FFFFFF"/><rect x="12" y="5" width="1" height="1" fill="#6A8AD0"/><rect x="0" y="6" width="1" height="1" fill="#3A3030"/><rect x="1" y="6" width="1" height="1" fill="#D8E8F8"/><rect x="2" y="6" width="4" height="1" fill="#B8E0F0"/><rect x="6" y="6" width="1" height="1" fill="#D8E8F8"/><rect x="7" y="6" width="1" height="1" fill="#3A3030"/><rect x="8" y="6" width="3" height="1" fill="#6A8AD0"/><rect x="11" y="6" width="1" height="1" fill="#FFFFFF"/><rect x="12" y="6" width="1" height="1" fill="#6A8AD0"/><rect x="0" y="7" width="1" height="1" fill="#3A3030"/><rect x="1" y="7" width="1" height="1" fill="#D8E8F8"/><rect x="2" y="7" width="4" height="1" fill="#B8E0F0"/><rect x="6" y="7" width="1" height="1" fill="#D8E8F8"/><rect x="7" y="7" width="1" height="1" fill="#3A3030"/><rect x="8" y="7" width="4" height="1" fill="#FFFFFF"/><rect x="12" y="7" width="1" height="1" fill="#6A8AD0"/><rect x="0" y="8" width="1" height="1" fill="#3A3030"/><rect x="1" y="8" width="2" height="1" fill="#D8E8F8"/><rect x="3" y="8" width="2" height="1" fill="#B8E0F0"/><rect x="5" y="8" width="2" height="1" fill="#D8E8F8"/><rect x="7" y="8" width="1" height="1" fill="#3A3030"/><rect x="8" y="8" width="3" height="1" fill="#6A8AD0"/><rect x="11" y="8" width="1" height="1" fill="#FFFFFF"/><rect x="12" y="8" width="1" height="1" fill="#6A8AD0"/><rect x="1" y="9" width="1" height="1" fill="#3A3030"/><rect x="2" y="9" width="4" height="1" fill="#D8E8F8"/><rect x="6" y="9" width="1" height="1" fill="#3A3030"/><rect x="7" y="9" width="1" height="1" fill="#E89830"/><rect x="8" y="9" width="4" height="1" fill="#FFFFFF"/><rect x="12" y="9" width="1" height="1" fill="#6A8AD0"/><rect x="1" y="10" width="1" height="1" fill="#6A8AD0"/><rect x="2" y="10" width="4" height="1" fill="#3A3030"/><rect x="6" y="10" width="1" height="1" fill="#FFFFFF"/><rect x="7" y="10" width="2" height="1" fill="#E89830"/><rect x="9" y="10" width="3" height="1" fill="#FFFFFF"/><rect x="12" y="10" width="1" height="1" fill="#C0C0C0"/><rect x="1" y="11" width="1" height="1" fill="#6A8AD0"/><rect x="2" y="11" width="6" height="1" fill="#FFFFFF"/><rect x="8" y="11" width="2" height="1" fill="#E89830"/><rect x="10" y="11" width="2" height="1" fill="#FFFFFF"/><rect x="12" y="11" width="1" height="1" fill="#6A8AD0"/><rect x="1" y="12" width="1" height="1" fill="#6A8AD0"/><rect x="2" y="12" width="7" height="1" fill="#FFFFFF"/><rect x="9" y="12" width="2" height="1" fill="#E89830"/><rect x="11" y="12" width="1" height="1" fill="#FFFFFF"/><rect x="12" y="12" width="1" height="1" fill="#6A8AD0"/><rect x="1" y="13" width="1" height="1" fill="#6A8AD0"/><rect x="2" y="13" width="8" height="1" fill="#FFFFFF"/><rect x="10" y="13" width="2" height="1" fill="#E89830"/><rect x="12" y="13" width="1" height="1" fill="#6A8AD0"/><rect x="1" y="14" width="12" height="1" fill="#6A8AD0"/></svg>
<div class="ab" style="left:578px;top:549px;width:1px;height:18px;background:#ACA899"></div>
<div class="ab" style="left:582px;top:549px;width:148px;height:18px;border:1px solid #ACA899"></div>
<svg style="left:8px;top:573px" width="14" height="13" shape-rendering="crispEdges"><rect x="2" y="0" width="7" height="1" fill="#808080"/><rect x="9" y="0" width="1" height="1" fill="#3A3030"/><rect x="2" y="1" width="1" height="1" fill="#808080"/><rect x="3" y="1" width="6" height="1" fill="#FFFFFF"/><rect x="9" y="1" width="1" height="1" fill="#3A3030"/><rect x="10" y="1" width="1" height="1" fill="#FFFFFF"/><rect x="11" y="1" width="1" height="1" fill="#3A3030"/><rect x="0" y="2" width="8" height="1" fill="#808080"/><rect x="8" y="2" width="1" height="1" fill="#000000"/><rect x="9" y="2" width="1" height="1" fill="#FFFFFF"/><rect x="10" y="2" width="2" height="1" fill="#3A3030"/><rect x="0" y="3" width="1" height="1" fill="#808080"/><rect x="1" y="3" width="6" height="1" fill="#FFFFFF"/><rect x="7" y="3" width="1" height="1" fill="#808080"/><rect x="8" y="3" width="1" height="1" fill="#000000"/><rect x="9" y="3" width="1" height="1" fill="#3A3030"/><rect x="10" y="3" width="1" height="1" fill="#FFFFFF"/><rect x="11" y="3" width="1" height="1" fill="#000000"/><rect x="0" y="4" width="1" height="1" fill="#808080"/><rect x="1" y="4" width="1" height="1" fill="#FFFFFF"/><rect x="2" y="4" width="4" height="1" fill="#3030FF"/><rect x="6" y="4" width="1" height="1" fill="#FFFFFF"/><rect x="7" y="4" width="1" height="1" fill="#808080"/><rect x="8" y="4" width="1" height="1" fill="#FFFFFF"/><rect x="9" y="4" width="3" height="1" fill="#000000"/><rect x="0" y="5" width="1" height="1" fill="#808080"/><rect x="1" y="5" width="6" height="1" fill="#FFFFFF"/><rect x="7" y="5" width="1" height="1" fill="#808080"/><rect x="8" y="5" width="3" height="1" fill="#FFFFFF"/><rect x="11" y="5" width="1" height="1" fill="#000000"/><rect x="0" y="6" width="1" height="1" fill="#808080"/><rect x="1" y="6" width="1" height="1" fill="#FFFFFF"/><rect x="2" y="6" width="4" height="1" fill="#3030FF"/><rect x="6" y="6" width="1" height="1" fill="#FFFFFF"/><rect x="7" y="6" width="1" height="1" fill="#808080"/><rect x="8" y="6" width="3" height="1" fill="#FFFFFF"/><rect x="11" y="6" width="1" height="1" fill="#000000"/><rect x="0" y="7" width="1" height="1" fill="#808080"/><rect x="1" y="7" width="6" height="1" fill="#FFFFFF"/><rect x="7" y="7" width="6" height="1" fill="#808080"/><rect x="13" y="7" width="1" height="1" fill="#3A3030"/><rect x="0" y="8" width="1" height="1" fill="#808080"/><rect x="1" y="8" width="1" height="1" fill="#FFFFFF"/><rect x="2" y="8" width="4" height="1" fill="#3030FF"/><rect x="6" y="8" width="1" height="1" fill="#FFFFFF"/><rect x="7" y="8" width="1" height="1" fill="#808080"/><rect x="8" y="8" width="5" height="1" fill="#FFFFFF"/><rect x="13" y="8" width="1" height="1" fill="#000000"/><rect x="0" y="9" width="1" height="1" fill="#808080"/><rect x="1" y="9" width="6" height="1" fill="#FFFFFF"/><rect x="7" y="9" width="1" height="1" fill="#808080"/><rect x="8" y="9" width="1" height="1" fill="#FFFFFF"/><rect x="9" y="9" width="2" height="1" fill="#3030FF"/><rect x="11" y="9" width="2" height="1" fill="#FFFFFF"/><rect x="13" y="9" width="1" height="1" fill="#000000"/><rect x="0" y="10" width="1" height="1" fill="#808080"/><rect x="1" y="10" width="1" height="1" fill="#FFFFFF"/><rect x="2" y="10" width="5" height="1" fill="#3030FF"/><rect x="7" y="10" width="1" height="1" fill="#808080"/><rect x="8" y="10" width="1" height="1" fill="#FFFFFF"/><rect x="9" y="10" width="3" height="1" fill="#3030FF"/><rect x="12" y="10" width="1" height="1" fill="#FFFFFF"/><rect x="13" y="10" width="1" height="1" fill="#000000"/><rect x="0" y="11" width="1" height="1" fill="#808080"/><rect x="1" y="11" width="6" height="1" fill="#FFFFFF"/><rect x="7" y="11" width="1" height="1" fill="#808080"/><rect x="8" y="11" width="5" height="1" fill="#FFFFFF"/><rect x="13" y="11" width="1" height="1" fill="#000000"/><rect x="0" y="12" width="7" height="1" fill="#000000"/><rect x="7" y="12" width="1" height="1" fill="#808080"/><rect x="8" y="12" width="6" height="1" fill="#000000"/></svg>
<div class="m" style="left:26px;top:573px;color:#000;transform:scaleX(0.918)">Браузер формализованного документооб...</div>
<div class="ab" style="left:251px;top:569px;width:1px;height:20px;background:#fff"></div>
<div class="ab" style="left:252px;top:569px;width:1px;height:20px;background:#ACA899"></div>
<div class="ab" style="left:257px;top:567px;width:241px;height:23px;background:#FCFCF2;border-top:2px solid #716F64;border-left:1px solid #716F64;border-bottom:1px solid #ACA899;border-right:1px solid #fff"></div>
<svg style="left:258px;top:573px" width="15" height="13" shape-rendering="crispEdges"><rect x="3" y="0" width="8" height="1" fill="#808080"/><rect x="11" y="0" width="1" height="1" fill="#000000"/><rect x="3" y="1" width="1" height="1" fill="#808080"/><rect x="4" y="1" width="7" height="1" fill="#FFFFFF"/><rect x="11" y="1" width="2" height="1" fill="#000000"/><rect x="3" y="2" width="1" height="1" fill="#808080"/><rect x="4" y="2" width="1" height="1" fill="#FFFFFF"/><rect x="5" y="2" width="4" height="1" fill="#C0C0C0"/><rect x="9" y="2" width="2" height="1" fill="#FFFFFF"/><rect x="11" y="2" width="1" height="1" fill="#000000"/><rect x="12" y="2" width="1" height="1" fill="#FFFFFF"/><rect x="13" y="2" width="1" height="1" fill="#000000"/><rect x="3" y="3" width="1" height="1" fill="#808080"/><rect x="4" y="3" width="7" height="1" fill="#FFFFFF"/><rect x="11" y="3" width="3" height="1" fill="#000000"/><rect x="3" y="4" width="1" height="1" fill="#808080"/><rect x="4" y="4" width="9" height="1" fill="#FFFFFF"/><rect x="13" y="4" width="1" height="1" fill="#000000"/><rect x="0" y="5" width="5" height="1" fill="#808080"/><rect x="5" y="5" width="1" height="1" fill="#000000"/><rect x="6" y="5" width="5" height="1" fill="#FFFFFF"/><rect x="11" y="5" width="1" height="1" fill="#C0C0C0"/><rect x="12" y="5" width="1" height="1" fill="#FFFFFF"/><rect x="13" y="5" width="1" height="1" fill="#000000"/><rect x="0" y="6" width="1" height="1" fill="#808080"/><rect x="1" y="6" width="3" height="1" fill="#FFFFFF"/><rect x="4" y="6" width="1" height="1" fill="#000000"/><rect x="5" y="6" width="1" height="1" fill="#FFFFFF"/><rect x="6" y="6" width="1" height="1" fill="#000000"/><rect x="7" y="6" width="6" height="1" fill="#FFFFFF"/><rect x="13" y="6" width="1" height="1" fill="#000000"/><rect x="0" y="7" width="1" height="1" fill="#808080"/><rect x="1" y="7" width="3" height="1" fill="#3030FF"/><rect x="4" y="7" width="3" height="1" fill="#000000"/><rect x="7" y="7" width="4" height="1" fill="#FFFFFF"/><rect x="11" y="7" width="1" height="1" fill="#C0C0C0"/><rect x="12" y="7" width="1" height="1" fill="#FFFFFF"/><rect x="13" y="7" width="1" height="1" fill="#000000"/><rect x="0" y="8" width="1" height="1" fill="#808080"/><rect x="1" y="8" width="3" height="1" fill="#FFFFFF"/><rect x="4" y="8" width="1" height="1" fill="#000000"/><rect x="5" y="8" width="8" height="1" fill="#FFFFFF"/><rect x="13" y="8" width="1" height="1" fill="#000000"/><rect x="0" y="9" width="1" height="1" fill="#808080"/><rect x="1" y="9" width="3" height="1" fill="#3030FF"/><rect x="4" y="9" width="1" height="1" fill="#000000"/><rect x="5" y="9" width="6" height="1" fill="#FFFFFF"/><rect x="11" y="9" width="1" height="1" fill="#C0C0C0"/><rect x="12" y="9" width="1" height="1" fill="#FFFFFF"/><rect x="13" y="9" width="1" height="1" fill="#000000"/><rect x="0" y="10" width="1" height="1" fill="#808080"/><rect x="1" y="10" width="4" height="1" fill="#FFFFFF"/><rect x="5" y="10" width="9" height="1" fill="#000000"/><rect x="0" y="11" width="1" height="1" fill="#808080"/><rect x="1" y="11" width="4" height="1" fill="#FFFFFF"/><rect x="5" y="11" width="1" height="1" fill="#000000"/><rect x="0" y="12" width="6" height="1" fill="#000000"/></svg>
<div class="m" style="left:279px;top:573px;color:#000;transform:scaleX(0.945)">ТЕСТОВЫЙ01/ Квартира/ 15.02.2011/ Ц...</div>
<div class="ab" style="left:501px;top:569px;width:1px;height:20px;background:#ACA899"></div>
<div class="ab" style="left:4px;top:591px;width:483px;height:16px;background:#ECE9D8;border-top:1px solid #ACA899;border-left:1px solid #CFCAB8;border-right:1px solid #fff"></div>
<div class="ab" style="left:489px;top:591px;width:331px;height:16px;background:#ECE9D8;border-top:1px solid #ACA899;border-left:1px solid #ACA899"></div>
<div class="t" style="left:6px;top:594px;color:#000;">Пользователь: Омельчук Галина Ростиславовна Роль: Начальник отдела ЮО</div>
<div class="t" style="left:627px;top:594px;color:#000;transform:scaleX(1.03);transform-origin:0 0">Ожидание</div>
<svg style="left:808px;top:595px" width="12" height="12" shape-rendering="crispEdges"><rect x="11" y="0" width="1" height="1" fill="#FFFFFF"/><rect x="10" y="1" width="1" height="1" fill="#FFFFFF"/><rect x="11" y="1" width="1" height="1" fill="#ACA899"/><rect x="9" y="2" width="1" height="1" fill="#FFFFFF"/><rect x="10" y="2" width="2" height="1" fill="#ACA899"/><rect x="8" y="3" width="1" height="1" fill="#FFFFFF"/><rect x="9" y="3" width="2" height="1" fill="#ACA899"/><rect x="7" y="4" width="1" height="1" fill="#FFFFFF"/><rect x="8" y="4" width="2" height="1" fill="#ACA899"/><rect x="11" y="4" width="1" height="1" fill="#FFFFFF"/><rect x="6" y="5" width="1" height="1" fill="#FFFFFF"/><rect x="7" y="5" width="2" height="1" fill="#ACA899"/><rect x="10" y="5" width="1" height="1" fill="#FFFFFF"/><rect x="11" y="5" width="1" height="1" fill="#ACA899"/><rect x="5" y="6" width="1" height="1" fill="#FFFFFF"/><rect x="6" y="6" width="2" height="1" fill="#ACA899"/><rect x="9" y="6" width="1" height="1" fill="#FFFFFF"/><rect x="10" y="6" width="2" height="1" fill="#ACA899"/><rect x="4" y="7" width="1" height="1" fill="#FFFFFF"/><rect x="5" y="7" width="2" height="1" fill="#ACA899"/><rect x="8" y="7" width="1" height="1" fill="#FFFFFF"/><rect x="9" y="7" width="2" height="1" fill="#ACA899"/><rect x="3" y="8" width="1" height="1" fill="#FFFFFF"/><rect x="4" y="8" width="2" height="1" fill="#ACA899"/><rect x="7" y="8" width="1" height="1" fill="#FFFFFF"/><rect x="8" y="8" width="2" height="1" fill="#ACA899"/><rect x="11" y="8" width="1" height="1" fill="#FFFFFF"/><rect x="2" y="9" width="1" height="1" fill="#FFFFFF"/><rect x="3" y="9" width="2" height="1" fill="#ACA899"/><rect x="6" y="9" width="1" height="1" fill="#FFFFFF"/><rect x="7" y="9" width="2" height="1" fill="#ACA899"/><rect x="10" y="9" width="1" height="1" fill="#FFFFFF"/><rect x="11" y="9" width="1" height="1" fill="#ACA899"/><rect x="1" y="10" width="1" height="1" fill="#FFFFFF"/><rect x="2" y="10" width="2" height="1" fill="#ACA899"/><rect x="5" y="10" width="1" height="1" fill="#FFFFFF"/><rect x="6" y="10" width="2" height="1" fill="#ACA899"/><rect x="9" y="10" width="1" height="1" fill="#FFFFFF"/><rect x="10" y="10" width="2" height="1" fill="#ACA899"/><rect x="0" y="11" width="1" height="1" fill="#FFFFFF"/><rect x="1" y="11" width="2" height="1" fill="#ACA899"/><rect x="4" y="11" width="1" height="1" fill="#FFFFFF"/><rect x="5" y="11" width="2" height="1" fill="#ACA899"/><rect x="8" y="11" width="1" height="1" fill="#FFFFFF"/><rect x="9" y="11" width="2" height="1" fill="#ACA899"/></svg>
</body></html>
